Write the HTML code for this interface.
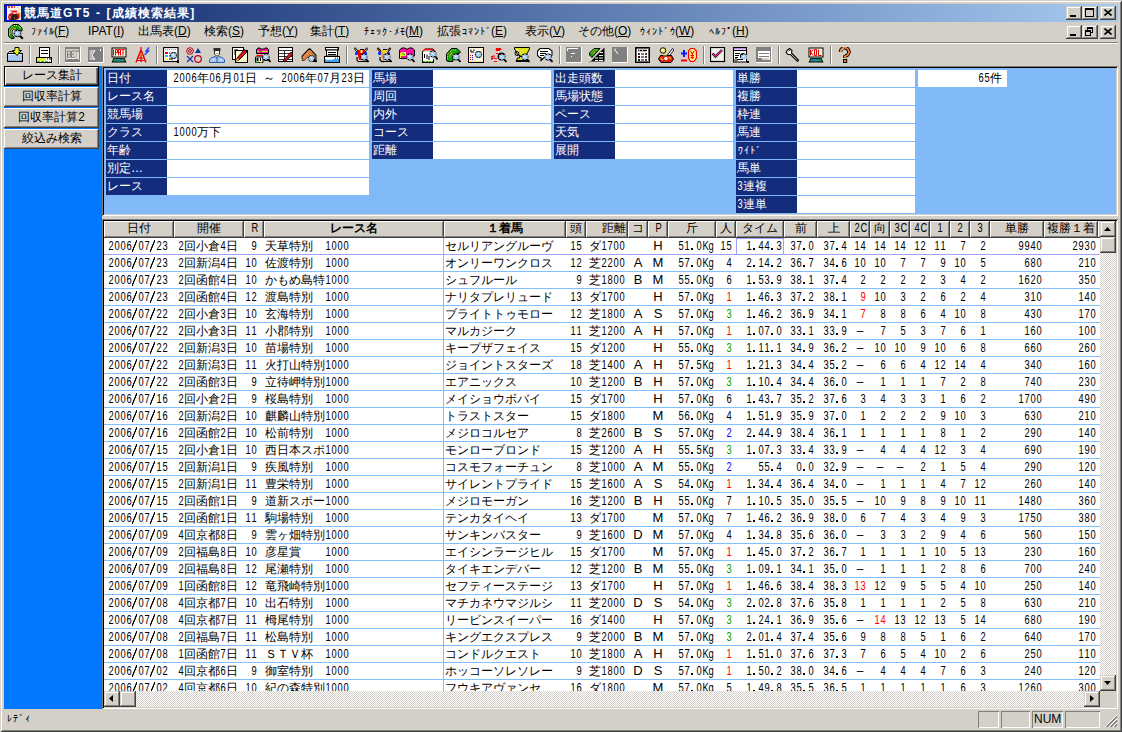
<!DOCTYPE html><html><head><meta charset="utf-8"><style>
*{box-sizing:border-box;margin:0;padding:0}
html,body{width:1122px;height:732px;overflow:hidden;background:#d4d0c8}
body{position:relative;font-family:"Liberation Sans",sans-serif;font-size:12px;color:#000}
div,span.a{position:absolute}
.h{display:inline-block;font-size:11px;position:relative;top:-1px}.h i{display:inline-block;width:6px;text-align:center;font-style:normal;transform:scale(.85,1.2)}.h i.d{transform:none;color:transparent;height:12px;vertical-align:-3px;background:linear-gradient(#000,#000) no-repeat 1px 8px/2px 2px}.h i.s{transform:none;color:transparent;height:12px;vertical-align:-3px;background:linear-gradient(to bottom right,transparent 40%,#000 46%,#000 54%,transparent 60%) no-repeat 0 0/5px 12px}
b.k,b.n{display:inline-block;width:12px;text-align:center;font-weight:inherit}b.n{width:6px;font-size:10px}.tt b.k{width:13px}
.raised{background:#d4d0c8;box-shadow:inset -1px -1px #404040,inset 1px 1px #fff,inset -2px -2px #808080}
.raised2{background:#d4d0c8;box-shadow:inset -1px -1px #404040,inset 1px 1px #d4d0c8,inset -2px -2px #808080,inset 2px 2px #fff}
.sunken{box-shadow:inset 1px 1px #808080,inset -1px -1px #fff,inset 2px 2px #000,inset -2px -2px #d4d0c8}
.dither{background-color:#fff;background-image:linear-gradient(45deg,#d4d0c8 25%,transparent 25%,transparent 75%,#d4d0c8 75%),linear-gradient(45deg,#d4d0c8 25%,transparent 25%,transparent 75%,#d4d0c8 75%);background-size:2px 2px;background-position:0 0,1px 1px}
.mi{top:21px;height:20px;line-height:20px;white-space:nowrap}
.tb{top:47px;width:16px;height:16px}
.sep{top:46px;width:2px;height:18px;border-left:1px solid #808080;border-right:1px solid #fff}
.lbl{background:#142c7c;color:#fff;height:17px;line-height:17px;padding-left:1px;white-space:nowrap}
.val{background:#fff;height:17px;line-height:17px;white-space:nowrap}
.hd{top:221px;height:17px;line-height:15px;text-align:center;white-space:nowrap;overflow:hidden}
.c{height:16px;line-height:16px;white-space:nowrap;overflow:hidden}
.rl{left:104px;width:996px;height:1px;background:#80c0ff}
.btn{left:4px;width:95px;height:20px;line-height:19px;text-align:center}
</style></head><body>
<div style="left:0;top:0;width:1122px;height:732px;box-shadow:inset 1px 1px #d4d0c8,inset -1px -1px #404040,inset 2px 2px #fff,inset -2px -2px #808080"></div><div style="left:4px;top:4px;width:1114px;height:18px;background:linear-gradient(90deg,#0a246a,#a6caf0)"></div><svg style="position:absolute;left:6px;top:5px" width="16" height="16" viewBox="0 0 16 16"><rect x="0.5" y="0.5" width="15" height="15" fill="#f8f8e0" stroke="#0010ff"/><path d="M2 2h2M5 2h2M8 2h1" stroke="#e00000" stroke-width="1.6"/><path d="M12 2v1M13.5 4v1M12 6v1M13.5 8v1M12 10v1M13.5 12v1" stroke="#90b8f0"/><path d="M5 6.5h6" stroke="#ff1010" stroke-width="2"/><rect x="4" y="5" width="2" height="2" fill="#c0a0ff"/><path d="M3 9L6 8L9 9L12 8L14 10L13 14L10 15H3L2 12Z" fill="#c01010"/><path d="M6 10L10 9L12 12L9 15H5Z" fill="#202020"/><path d="M12 8h2v4" stroke="#f0a040" stroke-width="1.2" fill="none"/><path d="M3 12h2M8 13h1" stroke="#f0a060"/></svg><div class="tt" style="left:24px;top:4px;height:18px;line-height:18px;color:#fff;font-weight:bold;font-size:12px;letter-spacing:1.6px;white-space:nowrap"><b class="k">競</b><b class="k">馬</b><b class="k">道</b>GT5 - [<b class="k">成</b><b class="k">績</b><b class="k">検</b><b class="k">索</b><b class="k">結</b><b class="k">果</b>]</div><div class="raised2" style="left:1066px;top:6px;width:16px;height:14px"><div style="left:4px;top:9px;width:6px;height:2px;background:#000"></div></div><div class="raised2" style="left:1082px;top:6px;width:16px;height:14px"><div style="left:3px;top:2px;width:9px;height:9px;border:1px solid #000;border-top-width:2px"></div></div><div class="raised2" style="left:1100px;top:6px;width:16px;height:14px"><svg style="position:absolute;left:4px;top:3px" width="8" height="7" viewBox="0 0 8 7"><path d="M0.5 0.5L7.5 6.5M7.5 0.5L0.5 6.5" stroke="#000" stroke-width="1.6"/></svg></div><div class="raised2" style="left:1066px;top:25px;width:16px;height:14px"><div style="left:4px;top:9px;width:6px;height:2px;background:#000"></div></div><div class="raised2" style="left:1082px;top:25px;width:16px;height:14px"><div style="left:5px;top:2px;width:6px;height:6px;border:1px solid #000;border-top-width:2px"></div><div style="left:3px;top:5px;width:6px;height:6px;border:1px solid #000;border-top-width:2px;background:#d4d0c8"></div></div><div class="raised2" style="left:1100px;top:25px;width:16px;height:14px"><svg style="position:absolute;left:4px;top:3px" width="8" height="7" viewBox="0 0 8 7"><path d="M0.5 0.5L7.5 6.5M7.5 0.5L0.5 6.5" stroke="#000" stroke-width="1.6"/></svg></div><svg style="position:absolute;left:7px;top:23px" width="17" height="17" viewBox="0 0 17 17"><path d="M1.5 13V6L6 1.5H11.5L15 5V8H11.5L10 6H7L5 8V12L7 14V15.5H4Z" fill="#10a010" stroke="#000"/><path d="M2.5 12.5V6.5L6.5 2.5H11" stroke="#e8f020" stroke-dasharray="1 1" fill="none"/><path d="M12 3.5L14 5.5" stroke="#e8f020"/><path d="M4.2 11.5V8L6.5 5.5H9" stroke="#e09040" stroke-width="1.1" fill="none"/><circle cx="10.5" cy="10.5" r="3.8" fill="#000"/><path d="M10.5 7.6L11.6 9L13.4 8.8L12.7 10.5L13.4 12.2L11.6 12L10.5 13.4L9.4 12L7.6 12.2L8.3 10.5L7.6 8.8L9.4 9Z" fill="#a8d0f8" stroke="#a8d0f8" stroke-width="1"/><circle cx="9.8" cy="10" r="0.8" fill="#fff"/><path d="M13 13L15.8 15.8" stroke="#000" stroke-width="2"/></svg><div class="mi" style="left:30px"><b class="n">ﾌ</b><b class="n">ｧ</b><b class="n">ｲ</b><b class="n">ﾙ</b>(<u>F</u>)</div><div class="mi" style="left:88px">IPAT(<u>I</u>)</div><div class="mi" style="left:138px"><b class="k">出</b><b class="k">馬</b><b class="k">表</b>(<u>D</u>)</div><div class="mi" style="left:204px"><b class="k">検</b><b class="k">索</b>(<u>S</u>)</div><div class="mi" style="left:258px"><b class="k">予</b><b class="k">想</b>(<u>Y</u>)</div><div class="mi" style="left:310px"><b class="k">集</b><b class="k">計</b>(<u>T</u>)</div><div class="mi" style="left:363px"><b class="n">ﾁ</b><b class="n">ｪ</b><b class="n">ｯ</b><b class="n">ｸ</b><b class="n">･</b><b class="n">ﾒ</b><b class="n">ﾓ</b>(<u>M</u>)</div><div class="mi" style="left:437px"><b class="k">拡</b><b class="k">張</b><b class="n">ｺ</b><b class="n">ﾏ</b><b class="n">ﾝ</b><b class="n">ﾄ</b><b class="n">ﾞ</b>(<u>E</u>)</div><div class="mi" style="left:525px"><b class="k">表</b><b class="k">示</b>(<u>V</u>)</div><div class="mi" style="left:578px"><b class="k">そ</b><b class="k">の</b><b class="k">他</b>(<u>O</u>)</div><div class="mi" style="left:639px"><b class="n">ｳ</b><b class="n">ｨ</b><b class="n">ﾝ</b><b class="n">ﾄ</b><b class="n">ﾞ</b><b class="n">ｳ</b>(<u>W</u>)</div><div class="mi" style="left:708px"><b class="n">ﾍ</b><b class="n">ﾙ</b><b class="n">ﾌ</b><b class="n">ﾟ</b>(<u>H</u>)</div><div style="left:4px;top:42px;width:1114px;height:1px;background:#808080"></div><div style="left:4px;top:43px;width:1114px;height:1px;background:#fff"></div><div class="sep" style="left:29px"></div><div class="sep" style="left:58px"></div><div class="sep" style="left:156px"></div><div class="sep" style="left:346px"></div><div class="sep" style="left:559px"></div><div class="sep" style="left:703px"></div><div class="sep" style="left:778px"></div><div class="sep" style="left:830px"></div><div class="tb" style="left:7px"><svg width="16" height="16" viewBox="0 0 16 16"><path d="M1.5 6.5V5.5L2.5 4.5H5.5L6.5 5.5" fill="none" stroke="#000"/><rect x="0.5" y="6.5" width="15" height="8" fill="#a8c8f0" stroke="#000"/><path d="M1 7.5h14" stroke="#e0ecff"/><path d="M2 13.5h13" stroke="#40a0ff" stroke-dasharray="1 1"/><path d="M8 0.5H12V3.5H14.5L10 8.5L5.5 3.5H8Z" fill="#f0f000" stroke="#000"/><path d="M9 1.5V5" stroke="#fff" stroke-width="0.8"/><path d="M12 4.5L11 6" stroke="#20a020"/></svg></div><div class="tb" style="left:36px"><svg width="16" height="16" viewBox="0 0 16 16"><rect x="3.5" y="0.5" width="10" height="10" fill="#fff" stroke="#000"/><path d="M5 3.5h7M5 6.5h7" stroke="#000" stroke-width="1.2"/><rect x="0.5" y="10.5" width="15" height="5" fill="#fff" stroke="#000"/><rect x="1" y="11" width="9" height="3" fill="#e8e840"/><path d="M11 12h1M13 12h2" stroke="#000"/><path d="M1 14.5h14" stroke="#e08020" stroke-dasharray="1 1"/><path d="M2 14.5h12" stroke="#20b020" stroke-dasharray="1 3"/></svg></div><div class="tb" style="left:65px"><svg width="16" height="16" viewBox="0 0 16 16"><rect x="0" y="0" width="16" height="16" fill="#fff"/><rect x="0" y="0" width="15" height="15" fill="#808080"/><rect x="1" y="2" width="13" height="11" fill="#d4d0c8"/><path d="M2.5 4V10.5H5L5.5 10V8L5 7.5H2.5M2.5 4H5L5.5 4.5V7" stroke="#808080" fill="none"/><path d="M10 4H6.5V10.5H10M6.5 7.2H9" stroke="#808080" fill="none"/><path d="M10.5 4H14M12.2 4V10.5" stroke="#808080" fill="none"/><path d="M3 11.5H6M7 11.5H10M12.8 5V11.5" stroke="#fff"/><rect x="2" y="12" width="11" height="1.2" fill="#808080"/></svg></div><div class="tb" style="left:88px"><svg width="16" height="16" viewBox="0 0 16 16"><rect x="0" y="0" width="16" height="16" fill="#fff"/><rect x="0" y="0" width="15" height="15" fill="#808080"/><rect x="2" y="2" width="11" height="11" fill="#808080"/><path d="M1.5 4h5M1.5 6h3M1.5 8h2M1.5 10h3M1.5 12h5" stroke="#fff"/><path d="M7 3L4 8L7 13" stroke="#fff" fill="none"/><rect x="12" y="2" width="1" height="2" fill="#fff"/></svg></div><div class="tb" style="left:111px"><svg width="16" height="16" viewBox="0 0 16 16"><rect x="0.5" y="0.5" width="15" height="10" fill="#000"/><rect x="1.5" y="1.5" width="13" height="8" fill="#fff8e0"/><path d="M2.5 2.5V8.5M4.5 2.5V8.5M4.5 2.5H6.5V5.5H4.5M7.5 8.5V2.5H9.5V8.5M7.5 5.5H9.5M10.5 2.5H13.5M12 2.5V8.5" stroke="#e00000" fill="none"/><path d="M0.5 15.5L2.5 11H13.5L15.5 15.5Z" fill="#000"/><path d="M1.8 14.5L3.2 11.8H12.8L14.2 14.5Z" fill="#20a040"/><path d="M4 13h3M9 12.5h3M6 14h3" stroke="#2060ff"/></svg></div><div class="tb" style="left:134px"><svg width="16" height="16" viewBox="0 0 16 16"><path d="M7 0V15" stroke="#e00000" stroke-width="1.3"/><path d="M2 15.5L6.5 4H7.5L12 15.5" stroke="#e00000" fill="none" stroke-width="1.3"/><path d="M5 8h4M4 11h6M3 13.5h8" stroke="#e00000" stroke-width="1.1"/><path d="M5.5 6L8.5 10M8.5 6L5.5 10" stroke="#f0a000" stroke-width="0.7"/><path d="M15 0.5L12 4H14.5L10.5 8" stroke="#2040ff" fill="none" stroke-width="1.3"/></svg></div><div class="tb" style="left:163px"><svg width="16" height="16" viewBox="0 0 16 16"><rect x="0.5" y="0.5" width="14.5" height="14" fill="#fff" stroke="#000" stroke-width="1.2"/><path d="M2 2.5h11" stroke="#a0a0a0" stroke-dasharray="1 1"/><rect x="2" y="5" width="3" height="2" fill="#ff0000"/><rect x="2" y="8" width="3" height="2" fill="#00c0ff"/><rect x="2" y="11" width="3" height="2" fill="#ffff00"/><path d="M6 6h1M6 9h1M6 12h4" stroke="#000"/><circle cx="10.5" cy="8.5" r="3.4" fill="#000"/><path d="M10.5 5.7l1 1.4l1.6-.2l-.6 1.6l.6 1.6l-1.6-.2l-1 1.4l-1-1.4l-1.6.2l.6-1.6l-.6-1.6l1.6.2z" fill="#b0d4f8" stroke="#b0d4f8"/><circle cx="9.9" cy="8.1" r="0.7" fill="#fff"/><rect x="14" y="13" width="2" height="3" fill="#000"/></svg></div><div class="tb" style="left:186px"><svg width="16" height="16" viewBox="0 0 16 16"><circle cx="4" cy="4" r="3.3" fill="none" stroke="#c00020"/><circle cx="4" cy="4" r="1.4" fill="none" stroke="#c00020"/><path d="M12 1L15 6H9Z" fill="#1030a0"/><path d="M1 9L7 15M7 9L1 15" stroke="#1030a0" stroke-width="1.2"/><circle cx="12" cy="12" r="3.3" fill="none" stroke="#c00020" stroke-width="1.2"/></svg></div><div class="tb" style="left:209px"><svg width="16" height="16" viewBox="0 0 16 16"><path d="M5 1.5H11V4H5Z" fill="#202020"/><rect x="4.5" y="1" width="7" height="2.5" fill="#303030"/><path d="M5.5 3.5H10.5V7L8.5 9H7.5L5.5 7Z" fill="#fff8f0" stroke="#000" stroke-width="0.8"/><rect x="7" y="6" width="2" height="1" fill="#f0a060"/><path d="M0.5 15.5V12.5L3 10.5L6 9.5L8 11L10 9.5L13 10.5L15.5 12.5V15.5Z" fill="#a8c8f0" stroke="#3060b0"/><path d="M8 11V15" stroke="#3060b0"/><path d="M3 13h2M11 13h2" stroke="#d8e8ff"/></svg></div><div class="tb" style="left:232px"><svg width="16" height="16" viewBox="0 0 16 16"><rect x="0.5" y="0.5" width="11" height="12" fill="#fff" stroke="#000"/><rect x="3.5" y="3.5" width="12" height="12" fill="#fff8d0" stroke="#000"/><path d="M2 3h4M2 5h2M2 7h2" stroke="#000"/><path d="M4 14L5 11L12.5 2.5L15 5L7 13Z" fill="#e01020" stroke="#000" stroke-width="0.9"/><path d="M4 14L5 11L7 13Z" fill="#f0e040"/></svg></div><div class="tb" style="left:255px"><svg width="16" height="16" viewBox="0 0 16 16"><path d="M1.5 6.5V2.5L3 1H5V2H10V1H12L13.5 2.5V6.5H1.5Z" fill="#ff10a0" stroke="#000"/><rect x="2" y="4" width="11" height="1" fill="#e0f020"/><rect x="4" y="4" width="3" height="1" fill="#20b020"/><path d="M1.5 8.5H8" stroke="#ff0000" stroke-width="1.3"/><path d="M0.5 15.5V10H8V15.5Z" fill="#fff" stroke="#000"/><rect x="1.5" y="11" width="2" height="3" fill="#000"/><rect x="5" y="11" width="1" height="3" fill="#000"/><path d="M1 15h3" stroke="#20b020"/><path d="M5 15h2" stroke="#f0f000"/><circle cx="11" cy="10.5" r="3.6" fill="#000"/><path d="M11 7.2L12 8.6L13.6 8.4L13 10L13.6 11.6L12 11.4L11 12.8L10 11.4L8.4 11.6L9 10L8.4 8.4L10 8.6Z" fill="#b0d4f8" stroke="#b0d4f8" stroke-width="1"/><circle cx="10.4" cy="9.6" r="0.7" fill="#fff"/><path d="M13.2 12.4L15.5 15" stroke="#000" stroke-width="1.8"/></svg></div><div class="tb" style="left:278px"><svg width="16" height="16" viewBox="0 0 16 16"><rect x="0.5" y="0.5" width="14" height="14" fill="#fff" stroke="#000"/><path d="M1 3.5h13M1 6.5h13M1 9.5h13M1 12.5h13M6.5 4v10" stroke="#000" stroke-width="0.8"/><path d="M5 14L13 5L15 7L7 15Z" fill="#e01020" stroke="#000" stroke-width="0.8"/></svg></div><div class="tb" style="left:301px"><svg width="16" height="16" viewBox="0 0 16 16"><path d="M0.5 9L7.5 1.5H9.5L15.5 8V15H12L10 11H6L3 14H1Z" fill="#000"/><path d="M1.5 9.5L7.5 3H9.5L14.5 8.5V14H12.5L10.5 10.5H6L3 13.5H1.5Z" fill="#e08040"/><path d="M9 3.5L14 9" stroke="#20b020" stroke-dasharray="1 2"/><path d="M2.5 10L7 5.5" stroke="#f0c080" stroke-dasharray="1 1"/><circle cx="10.5" cy="11.5" r="3.2" fill="#000"/><path d="M10.5 9.2L12.5 10L13 11.5L12.5 13L10.5 14L8.5 13L8 11.5L8.5 10Z" fill="#b0d4f8" stroke="#b0d4f8" stroke-width="1"/><circle cx="10.4" cy="11" r="0.7" fill="#fff"/><path d="M13.2 12.4L15.5 15" stroke="#000" stroke-width="1.8"/></svg></div><div class="tb" style="left:324px"><svg width="16" height="16" viewBox="0 0 16 16"><rect x="1.5" y="0.5" width="13" height="2.5" fill="#fff" stroke="#000"/><rect x="13" y="1" width="1" height="2" fill="#808080"/><rect x="2.5" y="3" width="11" height="6" fill="#fff" stroke="#000"/><path d="M4 5.5h8M4 7.5h8" stroke="#000"/><rect x="0.5" y="9.5" width="15" height="6" fill="#fff" stroke="#000"/><rect x="1" y="12" width="14" height="3" fill="#40a0f0"/><path d="M2 12.5h7" stroke="#d0e8ff"/><rect x="11" y="10.5" width="1" height="1" fill="#000"/><rect x="13" y="10.5" width="1" height="1" fill="#000"/></svg></div><div class="tb" style="left:353px"><svg width="16" height="16" viewBox="0 0 16 16"><path d="M1.5 1L5 5M14.5 1L11 5" stroke="#000" stroke-width="2.2"/><path d="M1.8 1.4L4.6 4.4M14.2 1.4L11.4 4.4" stroke="#fff" stroke-width="0.8"/><rect x="7" y="2" width="4" height="1" fill="#000"/><path d="M5 3H12V9L9 13H6L5 9Z" fill="#e80000"/><rect x="7.5" y="3" width="2" height="3" fill="#f0f040"/><rect x="8" y="3.5" width="1" height="1.5" fill="#fff"/><rect x="2" y="5" width="3" height="3" rx="1" fill="#0030ff"/><rect x="11" y="5" width="3" height="3" rx="1" fill="#0030ff"/><path d="M4 10L4 13L6 15M5 14.5H16" stroke="#000" stroke-width="1.2" fill="none"/><path d="M5 12.5L7 14" stroke="#fff"/><circle cx="11" cy="10" r="3.4" fill="#000"/><path d="M11 7.2L12 8.6L13.6 8.4L13 10L13.6 11.6L12 11.4L11 12.8L10 11.4L8.4 11.6L9 10L8.4 8.4L10 8.6Z" fill="#b0d4f8" stroke="#b0d4f8" stroke-width="1"/><circle cx="10.4" cy="9.6" r="0.7" fill="#fff"/><path d="M13.2 12.4L15.5 15" stroke="#000" stroke-width="1.8"/></svg></div><div class="tb" style="left:376px"><svg width="16" height="16" viewBox="0 0 16 16"><path d="M1.5 1L5 5M14.5 1L11 5" stroke="#000" stroke-width="2.2"/><path d="M1.8 1.4L4.6 4.4M14.2 1.4L11.4 4.4" stroke="#e08030" stroke-width="0.9"/><rect x="7" y="2" width="4" height="1" fill="#000"/><path d="M5 3H12V9L9 13H6L5 9Z" fill="#e8a060"/><rect x="6.5" y="3" width="4" height="3" fill="#e0e020"/><rect x="2" y="5" width="3" height="3" rx="1" fill="#0030ff"/><rect x="11" y="5" width="3" height="3" rx="1" fill="#0030ff"/><path d="M7.5 7V16" stroke="#e08030"/><path d="M4 10L4 13L6 15M5 14.5H16" stroke="#000" stroke-width="1.2" fill="none"/><circle cx="11" cy="10" r="3.4" fill="#000"/><path d="M11 7.2L12 8.6L13.6 8.4L13 10L13.6 11.6L12 11.4L11 12.8L10 11.4L8.4 11.6L9 10L8.4 8.4L10 8.6Z" fill="#b0d4f8" stroke="#b0d4f8" stroke-width="1"/><circle cx="10.4" cy="9.6" r="0.7" fill="#fff"/><path d="M13.2 12.4L15.5 15" stroke="#000" stroke-width="1.8"/></svg></div><div class="tb" style="left:399px"><svg width="16" height="16" viewBox="0 0 16 16"><path d="M0.5 11.5V3L3 1H6L7 2H9L10 1H13L15.5 3V9H10V11.5Z" fill="#ff10a0" stroke="#000"/><rect x="2" y="5" width="5" height="4" fill="#e0f020"/><path d="M3 6L6 8" stroke="#20a020"/><rect x="1" y="6" width="1" height="5" fill="#e0f020"/><circle cx="11" cy="10" r="3.4" fill="#000"/><path d="M11 7.2L12 8.6L13.6 8.4L13 10L13.6 11.6L12 11.4L11 12.8L10 11.4L8.4 11.6L9 10L8.4 8.4L10 8.6Z" fill="#b0d4f8" stroke="#b0d4f8" stroke-width="1"/><circle cx="10.4" cy="9.6" r="0.7" fill="#fff"/><path d="M13.2 12.4L15.5 15" stroke="#000" stroke-width="1.8"/></svg></div><div class="tb" style="left:422px"><svg width="16" height="16" viewBox="0 0 16 16"><path d="M0.5 4.5L3 2H11L12.5 4" stroke="#000" fill="none"/><path d="M1 4L3 2.5H10L12 4" stroke="#ff0000" stroke-width="1.4" fill="none"/><path d="M0.5 4.5V15.5H11.5V12" stroke="#000" fill="#fff"/><rect x="1" y="5" width="10" height="10" fill="#fff"/><path d="M2.5 7V11M5 7.5V12M7 9V13" stroke="#000"/><path d="M1 14.5h10" stroke="#20b020"/><path d="M3 14.5h1M6 14.5h1M9 14.5h1" stroke="#f0f000"/><path d="M0.5 4.5V15.5H11.5" stroke="#000" fill="none"/><circle cx="11" cy="7" r="3.4" fill="#000"/><path d="M11 4.2L12 5.6L13.6 5.4L13 7L13.6 8.6L12 8.4L11 9.8L10 8.4L8.4 8.6L9 7L8.4 5.4L10 5.6Z" fill="#b0d4f8" stroke="#b0d4f8" stroke-width="1"/><circle cx="10.4" cy="6.6" r="0.7" fill="#fff"/><path d="M13.5 9.5L15.5 12.5" stroke="#000" stroke-width="1.8"/></svg></div><div class="tb" style="left:445px"><svg width="16" height="16" viewBox="0 0 16 16"><path d="M1.5 13.5V7L6.5 1.5H12L15 4.5V6L11 7L8 9V14.5H3Z" fill="#10a010" stroke="#000"/><path d="M2.5 12V7.5L7 3H11.5" stroke="#e8f020" stroke-dasharray="1 1" fill="none"/><path d="M5 10V8L7.5 5.5" stroke="#e09040" stroke-width="1.2" fill="none"/><circle cx="11" cy="10" r="3.4" fill="#000"/><path d="M11 7.2L12 8.6L13.6 8.4L13 10L13.6 11.6L12 11.4L11 12.8L10 11.4L8.4 11.6L9 10L8.4 8.4L10 8.6Z" fill="#b0d4f8" stroke="#b0d4f8" stroke-width="1"/><circle cx="10.4" cy="9.6" r="0.7" fill="#fff"/><path d="M13.2 12.4L15.5 15" stroke="#000" stroke-width="1.8"/></svg></div><div class="tb" style="left:468px"><svg width="16" height="16" viewBox="0 0 16 16"><rect x="0.5" y="0.5" width="15" height="15" fill="#f8f4e0" stroke="#000"/><path d="M3 2.5V5H6M6 2.5V4" stroke="#000" fill="none"/><path d="M2 14.5H14" stroke="#f0d890"/><rect x="2" y="8" width="1" height="1" fill="#f00"/><rect x="2" y="10" width="1" height="1" fill="#f00"/><rect x="2" y="12" width="1" height="1" fill="#f00"/><rect x="4" y="8" width="1" height="1" fill="#00f"/><rect x="4" y="10" width="1" height="1" fill="#00f"/><rect x="4" y="12" width="1" height="1" fill="#00f"/><circle cx="10.5" cy="7.5" r="3.4" fill="#000"/><path d="M10.5 4.7l1 1.4l1.6-.2l-.6 1.6l.6 1.6l-1.6-.2l-1 1.4l-1-1.4l-1.6.2l.6-1.6l-.6-1.6l1.6.2z" fill="#b0d4f8" stroke="#b0d4f8"/><circle cx="9.9" cy="7.1" r="0.7" fill="#fff"/><rect x="14" y="2" width="1" height="2" fill="#f0d890"/></svg></div><div class="tb" style="left:491px"><svg width="16" height="16" viewBox="0 0 16 16"><path d="M5 1.5h5M4.5 2.5h6M5 3.5h4" stroke="#ff0000"/><path d="M0 9.5h2M0 11.5h2M1 10v3M3 8v4M3 14.5h3M4 11.5h2M5 6.5h2" stroke="#ff0000" stroke-width="1.1"/><circle cx="10.5" cy="9.5" r="3.9" fill="#000"/><path d="M11 7.2L12 8.6L13.6 8.4L13 10L13.6 11.6L12 11.4L11 12.8L10 11.4L8.4 11.6L9 10L8.4 8.4L10 8.6Z" fill="#b0d4f8" stroke="#b0d4f8" stroke-width="1"/><circle cx="10.4" cy="9.6" r="0.7" fill="#fff"/><path d="M13.2 12.4L15.5 15" stroke="#000" stroke-width="1.8"/></svg></div><div class="tb" style="left:514px"><svg width="16" height="16" viewBox="0 0 16 16"><path d="M0.5 0.5H15.5V2L12.5 7.5L9.5 9H6.5L3.5 7.5L0.5 2Z" fill="#e0e020" stroke="#000"/><path d="M3 2L6 7" stroke="#fff"/><circle cx="3" cy="6.5" r="2" fill="none" stroke="#000"/><path d="M5.5 9.5H10.5V11H12.5L14 14.5H2L3.5 11H5.5Z" fill="#e0e020" stroke="#000"/><path d="M3 13.5H13" stroke="#000"/><circle cx="11" cy="10" r="3.4" fill="#000"/><path d="M11 7.2L12 8.6L13.6 8.4L13 10L13.6 11.6L12 11.4L11 12.8L10 11.4L8.4 11.6L9 10L8.4 8.4L10 8.6Z" fill="#b0d4f8" stroke="#b0d4f8" stroke-width="1"/><circle cx="10.4" cy="9.6" r="0.7" fill="#fff"/><path d="M13.2 12.4L15.5 15" stroke="#000" stroke-width="1.8"/></svg></div><div class="tb" style="left:537px"><svg width="16" height="16" viewBox="0 0 16 16"><path d="M3 1.5H12L15 4V8L13 10.5H7L4 13.5V10.5H2.5L0.5 8.5V4Z" fill="#fff" stroke="#000" stroke-width="1.1"/><path d="M3 4.5h8M3 6.5h6M3 8.5h4" stroke="#000"/><path d="M4.5 13.5L6 12" stroke="#000"/><circle cx="11" cy="10" r="3.4" fill="#000"/><path d="M11 7.2L12 8.6L13.6 8.4L13 10L13.6 11.6L12 11.4L11 12.8L10 11.4L8.4 11.6L9 10L8.4 8.4L10 8.6Z" fill="#b0d4f8" stroke="#b0d4f8" stroke-width="1"/><circle cx="10.4" cy="9.6" r="0.7" fill="#fff"/><path d="M13.2 12.4L15.5 15" stroke="#000" stroke-width="1.8"/></svg></div><div class="tb" style="left:566px"><svg width="16" height="16" viewBox="0 0 16 16"><rect x="0" y="0" width="16" height="16" fill="#fff"/><rect x="0" y="0" width="15" height="15" fill="#808080"/><path d="M1.5 4V1.5H12" stroke="#fff" fill="none"/><path d="M5 6.5h4" stroke="#fff"/><rect x="5" y="9" width="1" height="1" fill="#fff"/></svg></div><div class="tb" style="left:589px"><svg width="16" height="16" viewBox="0 0 16 16"><path d="M0.5 15.5L15.5 0.5V14.5H0.5Z" fill="#000"/><path d="M6 11h3M10 11h4M6 13.5h3M10 13.5h4M10 8.5h4M11 5.5h3" stroke="#fff"/><path d="M0.5 6L5 1.5H11L3 10.5L0.5 8Z" fill="#10a010" stroke="#000"/><path d="M2 6L5 3H9" stroke="#e8f020" stroke-dasharray="1 1" fill="none"/><path d="M4 7L6 5" stroke="#e09040" stroke-width="1.2"/><path d="M0 10L2 13" stroke="#fff" stroke-width="0.6"/></svg></div><div class="tb" style="left:612px"><svg width="16" height="16" viewBox="0 0 16 16"><rect x="0" y="0" width="16" height="16" fill="#fff"/><rect x="0" y="0" width="15" height="15" fill="#808080"/><path d="M3 1.5V3L6 7" stroke="#fff" fill="none"/></svg></div><div class="tb" style="left:635px"><svg width="16" height="16" viewBox="0 0 16 16"><rect x="0.5" y="0.5" width="14" height="15" fill="#fff" stroke="#000"/><rect x="1.5" y="1.5" width="12" height="13" fill="none" stroke="#000" stroke-width="0.6"/><path d="M3 3.5h9" stroke="#000" stroke-width="1.5"/><path d="M4 3.5h1M7 3.5h1" stroke="#f0d060"/><path d="M3 7h2M6.5 7h2M10 7h2M3 10h2M6.5 10h2M10 10h2M3 13h2M6.5 13h2M10 13h2" stroke="#000" stroke-width="2"/><path d="M3.5 7h1M7 7h1M10.5 7h1M7 10h1M10.5 10h1M7 13h1M10.5 13h1" stroke="#fff"/><path d="M3.5 10h1" stroke="#f00000"/><path d="M3.5 13h1" stroke="#40c020"/></svg></div><div class="tb" style="left:658px"><svg width="16" height="16" viewBox="0 0 16 16"><circle cx="5" cy="3.5" r="2.8" fill="#f0e040" stroke="#000" stroke-width="0.9"/><circle cx="4.5" cy="3" r="1" fill="#fff"/><path d="M8 10L14.5 1.5L16 3L10 10.5Z" fill="#fff" stroke="#000" stroke-width="0.9"/><path d="M0.5 12L2.5 8.5H13.5L15.5 12L13 15.5H3Z" fill="#e02010" stroke="#000"/><circle cx="8" cy="11.5" r="1.8" fill="#fff"/><path d="M2.5 11L5 13M11 10L13 12" stroke="#f0c030" stroke-width="1.1"/><path d="M5 8h4" stroke="#f0e040"/></svg></div><div class="tb" style="left:681px"><svg width="16" height="16" viewBox="0 0 16 16"><path d="M3 3V10M0 6.5H6" stroke="#0020ff" stroke-width="2"/><path d="M0 13.5H6" stroke="#ff0000" stroke-width="2"/><path d="M9.5 1.5H13L15.5 4V11L13 14.5H9.5L7.5 11V4Z" fill="#f8f080" stroke="#ff0000" stroke-width="1.2"/><path d="M9.5 4L11.3 7L13 4M11.3 7V12M9.5 8.5H13M9.5 10.5H13" stroke="#ff0000" fill="none" stroke-width="1"/></svg></div><div class="tb" style="left:710px"><svg width="16" height="16" viewBox="0 0 16 16"><rect x="0.5" y="0.5" width="14" height="14" fill="#f0f0e8" stroke="#000" stroke-width="1.2"/><path d="M2.5 6.5L5.5 9.5L12 3" stroke="#000" stroke-width="2.4" fill="none"/><path d="M2.5 6.5L5.5 9.5L12 3" stroke="#ff20a0" stroke-width="1.1" fill="none"/></svg></div><div class="tb" style="left:733px"><svg width="16" height="16" viewBox="0 0 16 16"><rect x="0.5" y="0.5" width="13" height="14.5" fill="#fff" stroke="#000"/><rect x="1" y="1" width="12" height="1.5" fill="#c090f0"/><path d="M1 3.5H13" stroke="#000"/><path d="M2 6.5h5M2 8.5h4M4 12.5h6M2 10.5H5" stroke="#000"/><circle cx="3" cy="13" r="1.3" fill="#fff" stroke="#000" stroke-width="0.8"/><rect x="14" y="14" width="2" height="2" fill="#000"/><circle cx="10" cy="9" r="3" fill="#000"/><path d="M11 7.2L12 8.6L13.6 8.4L13 10L13.6 11.6L12 11.4L11 12.8L10 11.4L8.4 11.6L9 10L8.4 8.4L10 8.6Z" fill="#b0d4f8" stroke="#b0d4f8" stroke-width="1"/><circle cx="10.4" cy="9.6" r="0.7" fill="#fff"/></svg></div><div class="tb" style="left:756px"><svg width="16" height="16" viewBox="0 0 16 16"><rect x="0" y="0" width="16" height="16" fill="#fff"/><rect x="0" y="0" width="15" height="15" fill="#808080"/><rect x="2" y="4" width="12" height="9" fill="#fff"/><path d="M3 6.5h10M3 9.5h10" stroke="#808080"/><rect x="2" y="11" width="4" height="2" fill="#808080"/><rect x="6" y="11" width="7" height="2" fill="#d4d0c8"/></svg></div><div class="tb" style="left:785px"><svg width="16" height="16" viewBox="0 0 16 16"><path d="M2 3.5L4.5 1.5L7 3.5L6.5 6L13.5 13L12.5 14.5L5.5 7.5L3 7.5L1 5.5Z" fill="#fff" stroke="#000" stroke-width="1.1"/><path d="M3.5 4.5L5 3" stroke="#000" stroke-width="0.8"/></svg></div><div class="tb" style="left:808px"><svg width="16" height="16" viewBox="0 0 16 16"><rect x="0.5" y="0.5" width="15" height="10" fill="#000"/><rect x="1.5" y="1.5" width="13" height="8" fill="#fff8e0"/><path d="M2.5 2.5V8.5M5 2.5L3 5.5L5 8.5M6.5 2.5H8.5V8.5H6.5Z M10.5 2.5V8.5H13.5" stroke="#e00000" fill="none"/><path d="M0.5 15.5L2.5 11H13.5L15.5 15.5Z" fill="#000"/><path d="M1.8 14.5L3.2 11.8H12.8L14.2 14.5Z" fill="#20a040"/><path d="M4 13h3M9 12.5h3M6 14h3" stroke="#2060ff"/></svg></div><div class="tb" style="left:837px"><svg width="16" height="16" viewBox="0 0 16 16"><path d="M3.5 5A4.2 4.2 0 1 1 10.5 8L8 9.5V11" stroke="#000" stroke-width="3.6" fill="none"/><path d="M3.5 5A4.2 4.2 0 1 1 10.5 8L8 9.5V11" stroke="#f08040" stroke-width="1.8" fill="none"/><path d="M4 4.5A3.8 3.8 0 0 1 7 2" stroke="#fff" stroke-width="0.7" fill="none"/><rect x="6.5" y="12.5" width="3.2" height="3" fill="#f08040" stroke="#000"/></svg></div><div style="left:4px;top:66px;width:98px;height:643px;background:#0078ff"></div><div class="btn" style="top:66px;background:#d4d0c8;box-shadow:inset 1px 1px #000,inset -1px -1px #000,inset 2px 2px #fff,inset -2px -2px #404040,inset -3px -3px #808080"><b class="k">レ</b><b class="k">ー</b><b class="k">ス</b><b class="k">集</b><b class="k">計</b></div><div class="btn raised" style="top:87px"><b class="k">回</b><b class="k">収</b><b class="k">率</b><b class="k">計</b><b class="k">算</b></div><div class="btn raised" style="top:108px"><b class="k">回</b><b class="k">収</b><b class="k">率</b><b class="k">計</b><b class="k">算</b>2</div><div class="btn raised" style="top:129px"><b class="k">絞</b><b class="k">込</b><b class="k">み</b><b class="k">検</b><b class="k">索</b></div><div class="sunken" style="left:102px;top:66px;width:1016px;height:150px;background:#80b8f8"></div><div class="lbl" style="left:106px;top:70px;width:61px"><b class="k">日</b><b class="k">付</b></div><div class="val" style="left:167px;top:70px;width:202px;padding-left:6px"><span class="h"><i>2</i><i>0</i><i>0</i><i>6</i></span><b class="k">年</b><span class="h"><i>0</i><i>6</i></span><b class="k">月</b><span class="h"><i>0</i><i>1</i></span><b class="k">日</b><span class="h"><i> </i></span><b class="k">～</b><span class="h"><i> </i><i>2</i><i>0</i><i>0</i><i>6</i></span><b class="k">年</b><span class="h"><i>0</i><i>7</i></span><b class="k">月</b><span class="h"><i>2</i><i>3</i></span><b class="k">日</b></div><div class="lbl" style="left:106px;top:88px;width:61px"><b class="k">レ</b><b class="k">ー</b><b class="k">ス</b><b class="k">名</b></div><div class="val" style="left:167px;top:88px;width:202px;padding-left:6px"></div><div class="lbl" style="left:106px;top:106px;width:61px"><b class="k">競</b><b class="k">馬</b><b class="k">場</b></div><div class="val" style="left:167px;top:106px;width:202px;padding-left:6px"></div><div class="lbl" style="left:106px;top:124px;width:61px"><b class="k">ク</b><b class="k">ラ</b><b class="k">ス</b></div><div class="val" style="left:167px;top:124px;width:202px;padding-left:6px"><span class="h"><i>1</i><i>0</i><i>0</i><i>0</i></span><b class="k">万</b><b class="k">下</b></div><div class="lbl" style="left:106px;top:142px;width:61px"><b class="k">年</b><b class="k">齢</b></div><div class="val" style="left:167px;top:142px;width:202px;padding-left:6px"></div><div class="lbl" style="left:106px;top:160px;width:61px"><b class="k">別</b><b class="k">定</b><b class="k">…</b></div><div class="val" style="left:167px;top:160px;width:202px;padding-left:6px"></div><div class="lbl" style="left:106px;top:178px;width:61px"><b class="k">レ</b><b class="k">ー</b><b class="k">ス</b></div><div class="val" style="left:167px;top:178px;width:202px;padding-left:6px"></div><div class="lbl" style="left:372px;top:70px;width:61px"><b class="k">馬</b><b class="k">場</b></div><div class="val" style="left:433px;top:70px;width:118px;padding-left:6px"></div><div class="lbl" style="left:372px;top:88px;width:61px"><b class="k">周</b><b class="k">回</b></div><div class="val" style="left:433px;top:88px;width:118px;padding-left:6px"></div><div class="lbl" style="left:372px;top:106px;width:61px"><b class="k">内</b><b class="k">外</b></div><div class="val" style="left:433px;top:106px;width:118px;padding-left:6px"></div><div class="lbl" style="left:372px;top:124px;width:61px"><b class="k">コ</b><b class="k">ー</b><b class="k">ス</b></div><div class="val" style="left:433px;top:124px;width:118px;padding-left:6px"></div><div class="lbl" style="left:372px;top:142px;width:61px"><b class="k">距</b><b class="k">離</b></div><div class="val" style="left:433px;top:142px;width:118px;padding-left:6px"></div><div class="lbl" style="left:554px;top:70px;width:61px"><b class="k">出</b><b class="k">走</b><b class="k">頭</b><b class="k">数</b></div><div class="val" style="left:615px;top:70px;width:118px;padding-left:6px"></div><div class="lbl" style="left:554px;top:88px;width:61px"><b class="k">馬</b><b class="k">場</b><b class="k">状</b><b class="k">態</b></div><div class="val" style="left:615px;top:88px;width:118px;padding-left:6px"></div><div class="lbl" style="left:554px;top:106px;width:61px"><b class="k">ペ</b><b class="k">ー</b><b class="k">ス</b></div><div class="val" style="left:615px;top:106px;width:118px;padding-left:6px"></div><div class="lbl" style="left:554px;top:124px;width:61px"><b class="k">天</b><b class="k">気</b></div><div class="val" style="left:615px;top:124px;width:118px;padding-left:6px"></div><div class="lbl" style="left:554px;top:142px;width:61px"><b class="k">展</b><b class="k">開</b></div><div class="val" style="left:615px;top:142px;width:118px;padding-left:6px"></div><div class="lbl" style="left:736px;top:70px;width:61px"><b class="k">単</b><b class="k">勝</b></div><div class="val" style="left:797px;top:70px;width:118px;padding-left:6px"></div><div class="lbl" style="left:736px;top:88px;width:61px"><b class="k">複</b><b class="k">勝</b></div><div class="val" style="left:797px;top:88px;width:118px;padding-left:6px"></div><div class="lbl" style="left:736px;top:106px;width:61px"><b class="k">枠</b><b class="k">連</b></div><div class="val" style="left:797px;top:106px;width:118px;padding-left:6px"></div><div class="lbl" style="left:736px;top:124px;width:61px"><b class="k">馬</b><b class="k">連</b></div><div class="val" style="left:797px;top:124px;width:118px;padding-left:6px"></div><div class="lbl" style="left:736px;top:142px;width:61px"><b class="n">ﾜ</b><b class="n">ｲ</b><b class="n">ﾄ</b><b class="n">ﾞ</b></div><div class="val" style="left:797px;top:142px;width:118px;padding-left:6px"></div><div class="lbl" style="left:736px;top:160px;width:61px"><b class="k">馬</b><b class="k">単</b></div><div class="val" style="left:797px;top:160px;width:118px;padding-left:6px"></div><div class="lbl" style="left:736px;top:178px;width:61px"><span class="h"><i>3</i></span><b class="k">連</b><b class="k">複</b></div><div class="val" style="left:797px;top:178px;width:118px;padding-left:6px"></div><div class="lbl" style="left:736px;top:196px;width:61px"><span class="h"><i>3</i></span><b class="k">連</b><b class="k">単</b></div><div class="val" style="left:797px;top:196px;width:118px;padding-left:6px"></div><div class="val" style="left:918px;top:70px;width:89px;text-align:right;padding-right:5px"><span class="h"><i>6</i><i>5</i></span><b class="k">件</b></div><div class="sunken" style="left:102px;top:219px;width:1016px;height:490px;background:#fff"></div><div class="hd raised" style="left:104px;width:70px;"><b class="k">日</b><b class="k">付</b></div><div class="hd raised" style="left:174px;width:70px;"><b class="k">開</b><b class="k">催</b></div><div class="hd raised" style="left:244px;width:20px;"><span class="h"><i>R</i></span></div><div class="hd raised" style="left:264px;width:180px;font-weight:bold;"><b class="k">レ</b><b class="k">ー</b><b class="k">ス</b><b class="k">名</b></div><div class="hd raised" style="left:444px;width:122px;font-weight:bold;"><b class="k">１</b><b class="k">着</b><b class="k">馬</b></div><div class="hd raised" style="left:566px;width:20px;"><b class="k">頭</b></div><div class="hd raised" style="left:586px;width:42px;text-align:right;padding-right:2px;"><b class="k">距</b><b class="k">離</b></div><div class="hd raised" style="left:628px;width:20px;"><b class="k">コ</b></div><div class="hd raised" style="left:648px;width:20px;"><span class="h"><i>P</i></span></div><div class="hd raised" style="left:668px;width:48px;"><b class="k">斤</b></div><div class="hd raised" style="left:716px;width:20px;"><b class="k">人</b></div><div class="hd raised" style="left:736px;width:48px;"><b class="k">タ</b><b class="k">イ</b><b class="k">ム</b></div><div class="hd raised" style="left:784px;width:33px;"><b class="k">前</b></div><div class="hd raised" style="left:817px;width:33px;"><b class="k">上</b></div><div class="hd raised" style="left:850px;width:20px;"><span class="h"><i>2</i><i>C</i></span></div><div class="hd raised" style="left:870px;width:20px;"><b class="k">向</b></div><div class="hd raised" style="left:890px;width:20px;"><span class="h"><i>3</i><i>C</i></span></div><div class="hd raised" style="left:910px;width:20px;"><span class="h"><i>4</i><i>C</i></span></div><div class="hd raised" style="left:930px;width:20px;"><span class="h"><i>1</i></span></div><div class="hd raised" style="left:950px;width:20px;"><span class="h"><i>2</i></span></div><div class="hd raised" style="left:970px;width:20px;"><span class="h"><i>3</i></span></div><div class="hd raised" style="left:990px;width:54px;"><b class="k">単</b><b class="k">勝</b></div><div class="hd raised" style="left:1044px;width:54px;"><b class="k">複</b><b class="k">勝</b><b class="k">１</b><b class="k">着</b></div><div class="hd raised" style="left:1098px;width:10px"></div><div class="c" style="left:104px;top:238px;width:70px;text-align:left;padding-left:4px;"><span class="h"><i>2</i><i>0</i><i>0</i><i>6</i><i class="s">/</i><i>0</i><i>7</i><i class="s">/</i><i>2</i><i>3</i></span></div><div class="c" style="left:174px;top:238px;width:70px;text-align:left;padding-left:4px;"><span class="h"><i>2</i></span><b class="k">回</b><b class="k">小</b><b class="k">倉</b><span class="h"><i>4</i></span><b class="k">日</b></div><div class="c" style="left:244px;top:238px;width:20px;text-align:right;padding-right:7px;"><span class="h"><i>9</i></span></div><div class="c" style="left:264px;top:238px;width:180px;text-align:left;padding-left:1px;"><b class="k">天</b><b class="k">草</b><b class="k">特</b><b class="k">別</b><b class="k">　</b><span class="h"><i>1</i><i>0</i><i>0</i><i>0</i></span></div><div class="c" style="left:444px;top:238px;width:122px;text-align:left;padding-left:1px;"><b class="k">セ</b><b class="k">ル</b><b class="k">リ</b><b class="k">ア</b><b class="k">ン</b><b class="k">グ</b><b class="k">ル</b><b class="k">ー</b><b class="k">ヴ</b></div><div class="c" style="left:566px;top:238px;width:20px;text-align:right;padding-right:4px;"><span class="h"><i>1</i><i>5</i></span></div><div class="c" style="left:586px;top:238px;width:42px;text-align:left;padding-left:3px;"><b class="k">ダ</b><span class="h"><i>1</i><i>7</i><i>0</i><i>0</i></span></div><div class="c" style="left:648px;top:238px;width:20px;text-align:center;font-size:13px;">H</div><div class="c" style="left:668px;top:238px;width:48px;text-align:right;padding-right:2px;"><span class="h"><i>5</i><i>1</i><i class="d">.</i><i>0</i><i>K</i><i>g</i></span></div><div class="c" style="left:716px;top:238px;width:20px;text-align:right;padding-right:4px;"><span class="h"><i>1</i><i>5</i></span></div><div class="c" style="left:736px;top:238px;width:48px;text-align:right;padding-right:2px;"><span class="h"><i>1</i><i class="d">.</i><i>4</i><i>4</i><i class="d">.</i><i>3</i></span></div><div class="c" style="left:784px;top:238px;width:33px;text-align:right;padding-right:3px;"><span class="h"><i>3</i><i>7</i><i class="d">.</i><i>0</i></span></div><div class="c" style="left:817px;top:238px;width:33px;text-align:right;padding-right:3px;"><span class="h"><i>3</i><i>7</i><i class="d">.</i><i>4</i></span></div><div class="c" style="left:850px;top:238px;width:20px;text-align:right;padding-right:4px;"><span class="h"><i>1</i><i>4</i></span></div><div class="c" style="left:870px;top:238px;width:20px;text-align:right;padding-right:4px;"><span class="h"><i>1</i><i>4</i></span></div><div class="c" style="left:890px;top:238px;width:20px;text-align:right;padding-right:4px;"><span class="h"><i>1</i><i>4</i></span></div><div class="c" style="left:910px;top:238px;width:20px;text-align:right;padding-right:4px;"><span class="h"><i>1</i><i>2</i></span></div><div class="c" style="left:930px;top:238px;width:20px;text-align:right;padding-right:4px;"><span class="h"><i>1</i><i>1</i></span></div><div class="c" style="left:950px;top:238px;width:20px;text-align:right;padding-right:4px;"><span class="h"><i>7</i></span></div><div class="c" style="left:970px;top:238px;width:20px;text-align:right;padding-right:4px;"><span class="h"><i>2</i></span></div><div class="c" style="left:990px;top:238px;width:54px;text-align:right;padding-right:2px;"><span class="h"><i>9</i><i>9</i><i>4</i><i>0</i></span></div><div class="c" style="left:1044px;top:238px;width:54px;text-align:right;padding-right:2px;"><span class="h"><i>2</i><i>9</i><i>3</i><i>0</i></span></div><div class="rl" style="top:254px;background:#a0a0ff"></div><div class="c" style="left:104px;top:255px;width:70px;text-align:left;padding-left:4px;"><span class="h"><i>2</i><i>0</i><i>0</i><i>6</i><i class="s">/</i><i>0</i><i>7</i><i class="s">/</i><i>2</i><i>3</i></span></div><div class="c" style="left:174px;top:255px;width:70px;text-align:left;padding-left:4px;"><span class="h"><i>2</i></span><b class="k">回</b><b class="k">新</b><b class="k">潟</b><span class="h"><i>4</i></span><b class="k">日</b></div><div class="c" style="left:244px;top:255px;width:20px;text-align:right;padding-right:7px;"><span class="h"><i>1</i><i>0</i></span></div><div class="c" style="left:264px;top:255px;width:180px;text-align:left;padding-left:1px;"><b class="k">佐</b><b class="k">渡</b><b class="k">特</b><b class="k">別</b><b class="k">　</b><span class="h"><i>1</i><i>0</i><i>0</i><i>0</i></span></div><div class="c" style="left:444px;top:255px;width:122px;text-align:left;padding-left:1px;"><b class="k">オ</b><b class="k">ン</b><b class="k">リ</b><b class="k">ー</b><b class="k">ワ</b><b class="k">ン</b><b class="k">ク</b><b class="k">ロ</b><b class="k">ス</b></div><div class="c" style="left:566px;top:255px;width:20px;text-align:right;padding-right:4px;"><span class="h"><i>1</i><i>2</i></span></div><div class="c" style="left:586px;top:255px;width:42px;text-align:left;padding-left:3px;"><b class="k">芝</b><span class="h"><i>2</i><i>2</i><i>0</i><i>0</i></span></div><div class="c" style="left:628px;top:255px;width:20px;text-align:center;font-size:13px;">A</div><div class="c" style="left:648px;top:255px;width:20px;text-align:center;font-size:13px;">M</div><div class="c" style="left:668px;top:255px;width:48px;text-align:right;padding-right:2px;"><span class="h"><i>5</i><i>7</i><i class="d">.</i><i>0</i><i>K</i><i>g</i></span></div><div class="c" style="left:716px;top:255px;width:20px;text-align:right;padding-right:4px;"><span class="h"><i>4</i></span></div><div class="c" style="left:736px;top:255px;width:48px;text-align:right;padding-right:2px;"><span class="h"><i>2</i><i class="d">.</i><i>1</i><i>4</i><i class="d">.</i><i>2</i></span></div><div class="c" style="left:784px;top:255px;width:33px;text-align:right;padding-right:3px;"><span class="h"><i>3</i><i>6</i><i class="d">.</i><i>7</i></span></div><div class="c" style="left:817px;top:255px;width:33px;text-align:right;padding-right:3px;"><span class="h"><i>3</i><i>4</i><i class="d">.</i><i>6</i></span></div><div class="c" style="left:850px;top:255px;width:20px;text-align:right;padding-right:4px;"><span class="h"><i>1</i><i>0</i></span></div><div class="c" style="left:870px;top:255px;width:20px;text-align:right;padding-right:4px;"><span class="h"><i>1</i><i>0</i></span></div><div class="c" style="left:890px;top:255px;width:20px;text-align:right;padding-right:4px;"><span class="h"><i>7</i></span></div><div class="c" style="left:910px;top:255px;width:20px;text-align:right;padding-right:4px;"><span class="h"><i>7</i></span></div><div class="c" style="left:930px;top:255px;width:20px;text-align:right;padding-right:4px;"><span class="h"><i>9</i></span></div><div class="c" style="left:950px;top:255px;width:20px;text-align:right;padding-right:4px;"><span class="h"><i>1</i><i>0</i></span></div><div class="c" style="left:970px;top:255px;width:20px;text-align:right;padding-right:4px;"><span class="h"><i>5</i></span></div><div class="c" style="left:990px;top:255px;width:54px;text-align:right;padding-right:2px;"><span class="h"><i>6</i><i>8</i><i>0</i></span></div><div class="c" style="left:1044px;top:255px;width:54px;text-align:right;padding-right:2px;"><span class="h"><i>2</i><i>1</i><i>0</i></span></div><div class="rl" style="top:271px;background:#80c0ff"></div><div class="c" style="left:104px;top:272px;width:70px;text-align:left;padding-left:4px;"><span class="h"><i>2</i><i>0</i><i>0</i><i>6</i><i class="s">/</i><i>0</i><i>7</i><i class="s">/</i><i>2</i><i>3</i></span></div><div class="c" style="left:174px;top:272px;width:70px;text-align:left;padding-left:4px;"><span class="h"><i>2</i></span><b class="k">回</b><b class="k">函</b><b class="k">館</b><span class="h"><i>4</i></span><b class="k">日</b></div><div class="c" style="left:244px;top:272px;width:20px;text-align:right;padding-right:7px;"><span class="h"><i>1</i><i>0</i></span></div><div class="c" style="left:264px;top:272px;width:180px;text-align:left;padding-left:1px;"><b class="k">か</b><b class="k">も</b><b class="k">め</b><b class="k">島</b><b class="k">特</b><span class="h"><i>1</i><i>0</i><i>0</i><i>0</i></span></div><div class="c" style="left:444px;top:272px;width:122px;text-align:left;padding-left:1px;"><b class="k">シ</b><b class="k">ュ</b><b class="k">フ</b><b class="k">ル</b><b class="k">ー</b><b class="k">ル</b></div><div class="c" style="left:566px;top:272px;width:20px;text-align:right;padding-right:4px;"><span class="h"><i>9</i></span></div><div class="c" style="left:586px;top:272px;width:42px;text-align:left;padding-left:3px;"><b class="k">芝</b><span class="h"><i>1</i><i>8</i><i>0</i><i>0</i></span></div><div class="c" style="left:628px;top:272px;width:20px;text-align:center;font-size:13px;">B</div><div class="c" style="left:648px;top:272px;width:20px;text-align:center;font-size:13px;">M</div><div class="c" style="left:668px;top:272px;width:48px;text-align:right;padding-right:2px;"><span class="h"><i>5</i><i>5</i><i class="d">.</i><i>0</i><i>K</i><i>g</i></span></div><div class="c" style="left:716px;top:272px;width:20px;text-align:right;padding-right:4px;"><span class="h"><i>6</i></span></div><div class="c" style="left:736px;top:272px;width:48px;text-align:right;padding-right:2px;"><span class="h"><i>1</i><i class="d">.</i><i>5</i><i>3</i><i class="d">.</i><i>9</i></span></div><div class="c" style="left:784px;top:272px;width:33px;text-align:right;padding-right:3px;"><span class="h"><i>3</i><i>8</i><i class="d">.</i><i>1</i></span></div><div class="c" style="left:817px;top:272px;width:33px;text-align:right;padding-right:3px;"><span class="h"><i>3</i><i>7</i><i class="d">.</i><i>4</i></span></div><div class="c" style="left:850px;top:272px;width:20px;text-align:right;padding-right:4px;"><span class="h"><i>2</i></span></div><div class="c" style="left:870px;top:272px;width:20px;text-align:right;padding-right:4px;"><span class="h"><i>2</i></span></div><div class="c" style="left:890px;top:272px;width:20px;text-align:right;padding-right:4px;"><span class="h"><i>2</i></span></div><div class="c" style="left:910px;top:272px;width:20px;text-align:right;padding-right:4px;"><span class="h"><i>2</i></span></div><div class="c" style="left:930px;top:272px;width:20px;text-align:right;padding-right:4px;"><span class="h"><i>3</i></span></div><div class="c" style="left:950px;top:272px;width:20px;text-align:right;padding-right:4px;"><span class="h"><i>4</i></span></div><div class="c" style="left:970px;top:272px;width:20px;text-align:right;padding-right:4px;"><span class="h"><i>2</i></span></div><div class="c" style="left:990px;top:272px;width:54px;text-align:right;padding-right:2px;"><span class="h"><i>1</i><i>6</i><i>2</i><i>0</i></span></div><div class="c" style="left:1044px;top:272px;width:54px;text-align:right;padding-right:2px;"><span class="h"><i>3</i><i>5</i><i>0</i></span></div><div class="rl" style="top:288px;background:#80c0ff"></div><div class="c" style="left:104px;top:289px;width:70px;text-align:left;padding-left:4px;"><span class="h"><i>2</i><i>0</i><i>0</i><i>6</i><i class="s">/</i><i>0</i><i>7</i><i class="s">/</i><i>2</i><i>3</i></span></div><div class="c" style="left:174px;top:289px;width:70px;text-align:left;padding-left:4px;"><span class="h"><i>2</i></span><b class="k">回</b><b class="k">函</b><b class="k">館</b><span class="h"><i>4</i></span><b class="k">日</b></div><div class="c" style="left:244px;top:289px;width:20px;text-align:right;padding-right:7px;"><span class="h"><i>1</i><i>2</i></span></div><div class="c" style="left:264px;top:289px;width:180px;text-align:left;padding-left:1px;"><b class="k">渡</b><b class="k">島</b><b class="k">特</b><b class="k">別</b><b class="k">　</b><span class="h"><i>1</i><i>0</i><i>0</i><i>0</i></span></div><div class="c" style="left:444px;top:289px;width:122px;text-align:left;padding-left:1px;"><b class="k">ナ</b><b class="k">リ</b><b class="k">タ</b><b class="k">プ</b><b class="k">レ</b><b class="k">リ</b><b class="k">ュ</b><b class="k">ー</b><b class="k">ド</b></div><div class="c" style="left:566px;top:289px;width:20px;text-align:right;padding-right:4px;"><span class="h"><i>1</i><i>3</i></span></div><div class="c" style="left:586px;top:289px;width:42px;text-align:left;padding-left:3px;"><b class="k">ダ</b><span class="h"><i>1</i><i>7</i><i>0</i><i>0</i></span></div><div class="c" style="left:648px;top:289px;width:20px;text-align:center;font-size:13px;">H</div><div class="c" style="left:668px;top:289px;width:48px;text-align:right;padding-right:2px;"><span class="h"><i>5</i><i>7</i><i class="d">.</i><i>0</i><i>K</i><i>g</i></span></div><div class="c" style="left:716px;top:289px;width:20px;text-align:right;padding-right:4px;color:#ff0000;"><span class="h"><i>1</i></span></div><div class="c" style="left:736px;top:289px;width:48px;text-align:right;padding-right:2px;"><span class="h"><i>1</i><i class="d">.</i><i>4</i><i>6</i><i class="d">.</i><i>3</i></span></div><div class="c" style="left:784px;top:289px;width:33px;text-align:right;padding-right:3px;"><span class="h"><i>3</i><i>7</i><i class="d">.</i><i>2</i></span></div><div class="c" style="left:817px;top:289px;width:33px;text-align:right;padding-right:3px;"><span class="h"><i>3</i><i>8</i><i class="d">.</i><i>1</i></span></div><div class="c" style="left:850px;top:289px;width:20px;text-align:right;padding-right:4px;color:#ff0000;"><span class="h"><i>9</i></span></div><div class="c" style="left:870px;top:289px;width:20px;text-align:right;padding-right:4px;"><span class="h"><i>1</i><i>0</i></span></div><div class="c" style="left:890px;top:289px;width:20px;text-align:right;padding-right:4px;"><span class="h"><i>3</i></span></div><div class="c" style="left:910px;top:289px;width:20px;text-align:right;padding-right:4px;"><span class="h"><i>2</i></span></div><div class="c" style="left:930px;top:289px;width:20px;text-align:right;padding-right:4px;"><span class="h"><i>6</i></span></div><div class="c" style="left:950px;top:289px;width:20px;text-align:right;padding-right:4px;"><span class="h"><i>2</i></span></div><div class="c" style="left:970px;top:289px;width:20px;text-align:right;padding-right:4px;"><span class="h"><i>4</i></span></div><div class="c" style="left:990px;top:289px;width:54px;text-align:right;padding-right:2px;"><span class="h"><i>3</i><i>1</i><i>0</i></span></div><div class="c" style="left:1044px;top:289px;width:54px;text-align:right;padding-right:2px;"><span class="h"><i>1</i><i>4</i><i>0</i></span></div><div class="rl" style="top:305px;background:#80c0ff"></div><div class="c" style="left:104px;top:306px;width:70px;text-align:left;padding-left:4px;"><span class="h"><i>2</i><i>0</i><i>0</i><i>6</i><i class="s">/</i><i>0</i><i>7</i><i class="s">/</i><i>2</i><i>2</i></span></div><div class="c" style="left:174px;top:306px;width:70px;text-align:left;padding-left:4px;"><span class="h"><i>2</i></span><b class="k">回</b><b class="k">小</b><b class="k">倉</b><span class="h"><i>3</i></span><b class="k">日</b></div><div class="c" style="left:244px;top:306px;width:20px;text-align:right;padding-right:7px;"><span class="h"><i>1</i><i>0</i></span></div><div class="c" style="left:264px;top:306px;width:180px;text-align:left;padding-left:1px;"><b class="k">玄</b><b class="k">海</b><b class="k">特</b><b class="k">別</b><b class="k">　</b><span class="h"><i>1</i><i>0</i><i>0</i><i>0</i></span></div><div class="c" style="left:444px;top:306px;width:122px;text-align:left;padding-left:1px;"><b class="k">ブ</b><b class="k">ラ</b><b class="k">イ</b><b class="k">ト</b><b class="k">ト</b><b class="k">ゥ</b><b class="k">モ</b><b class="k">ロ</b><b class="k">ー</b></div><div class="c" style="left:566px;top:306px;width:20px;text-align:right;padding-right:4px;"><span class="h"><i>1</i><i>2</i></span></div><div class="c" style="left:586px;top:306px;width:42px;text-align:left;padding-left:3px;"><b class="k">芝</b><span class="h"><i>1</i><i>8</i><i>0</i><i>0</i></span></div><div class="c" style="left:628px;top:306px;width:20px;text-align:center;font-size:13px;">A</div><div class="c" style="left:648px;top:306px;width:20px;text-align:center;font-size:13px;">S</div><div class="c" style="left:668px;top:306px;width:48px;text-align:right;padding-right:2px;"><span class="h"><i>5</i><i>7</i><i class="d">.</i><i>0</i><i>K</i><i>g</i></span></div><div class="c" style="left:716px;top:306px;width:20px;text-align:right;padding-right:4px;color:#00a000;"><span class="h"><i>3</i></span></div><div class="c" style="left:736px;top:306px;width:48px;text-align:right;padding-right:2px;"><span class="h"><i>1</i><i class="d">.</i><i>4</i><i>6</i><i class="d">.</i><i>2</i></span></div><div class="c" style="left:784px;top:306px;width:33px;text-align:right;padding-right:3px;"><span class="h"><i>3</i><i>6</i><i class="d">.</i><i>9</i></span></div><div class="c" style="left:817px;top:306px;width:33px;text-align:right;padding-right:3px;"><span class="h"><i>3</i><i>4</i><i class="d">.</i><i>1</i></span></div><div class="c" style="left:850px;top:306px;width:20px;text-align:right;padding-right:4px;color:#ff0000;"><span class="h"><i>7</i></span></div><div class="c" style="left:870px;top:306px;width:20px;text-align:right;padding-right:4px;"><span class="h"><i>8</i></span></div><div class="c" style="left:890px;top:306px;width:20px;text-align:right;padding-right:4px;"><span class="h"><i>8</i></span></div><div class="c" style="left:910px;top:306px;width:20px;text-align:right;padding-right:4px;"><span class="h"><i>6</i></span></div><div class="c" style="left:930px;top:306px;width:20px;text-align:right;padding-right:4px;"><span class="h"><i>4</i></span></div><div class="c" style="left:950px;top:306px;width:20px;text-align:right;padding-right:4px;"><span class="h"><i>1</i><i>0</i></span></div><div class="c" style="left:970px;top:306px;width:20px;text-align:right;padding-right:4px;"><span class="h"><i>8</i></span></div><div class="c" style="left:990px;top:306px;width:54px;text-align:right;padding-right:2px;"><span class="h"><i>4</i><i>3</i><i>0</i></span></div><div class="c" style="left:1044px;top:306px;width:54px;text-align:right;padding-right:2px;"><span class="h"><i>1</i><i>7</i><i>0</i></span></div><div class="rl" style="top:322px;background:#80c0ff"></div><div class="c" style="left:104px;top:323px;width:70px;text-align:left;padding-left:4px;"><span class="h"><i>2</i><i>0</i><i>0</i><i>6</i><i class="s">/</i><i>0</i><i>7</i><i class="s">/</i><i>2</i><i>2</i></span></div><div class="c" style="left:174px;top:323px;width:70px;text-align:left;padding-left:4px;"><span class="h"><i>2</i></span><b class="k">回</b><b class="k">小</b><b class="k">倉</b><span class="h"><i>3</i></span><b class="k">日</b></div><div class="c" style="left:244px;top:323px;width:20px;text-align:right;padding-right:7px;"><span class="h"><i>1</i><i>1</i></span></div><div class="c" style="left:264px;top:323px;width:180px;text-align:left;padding-left:1px;"><b class="k">小</b><b class="k">郡</b><b class="k">特</b><b class="k">別</b><b class="k">　</b><span class="h"><i>1</i><i>0</i><i>0</i><i>0</i></span></div><div class="c" style="left:444px;top:323px;width:122px;text-align:left;padding-left:1px;"><b class="k">マ</b><b class="k">ル</b><b class="k">カ</b><b class="k">ジ</b><b class="k">ー</b><b class="k">ク</b></div><div class="c" style="left:566px;top:323px;width:20px;text-align:right;padding-right:4px;"><span class="h"><i>1</i><i>1</i></span></div><div class="c" style="left:586px;top:323px;width:42px;text-align:left;padding-left:3px;"><b class="k">芝</b><span class="h"><i>1</i><i>2</i><i>0</i><i>0</i></span></div><div class="c" style="left:628px;top:323px;width:20px;text-align:center;font-size:13px;">A</div><div class="c" style="left:648px;top:323px;width:20px;text-align:center;font-size:13px;">H</div><div class="c" style="left:668px;top:323px;width:48px;text-align:right;padding-right:2px;"><span class="h"><i>5</i><i>7</i><i class="d">.</i><i>0</i><i>K</i><i>g</i></span></div><div class="c" style="left:716px;top:323px;width:20px;text-align:right;padding-right:4px;color:#ff0000;"><span class="h"><i>1</i></span></div><div class="c" style="left:736px;top:323px;width:48px;text-align:right;padding-right:2px;"><span class="h"><i>1</i><i class="d">.</i><i>0</i><i>7</i><i class="d">.</i><i>0</i></span></div><div class="c" style="left:784px;top:323px;width:33px;text-align:right;padding-right:3px;"><span class="h"><i>3</i><i>3</i><i class="d">.</i><i>1</i></span></div><div class="c" style="left:817px;top:323px;width:33px;text-align:right;padding-right:3px;"><span class="h"><i>3</i><i>3</i><i class="d">.</i><i>9</i></span></div><div class="c" style="left:850px;top:323px;width:20px;text-align:right;padding-right:4px;"><b class="k">–</b></div><div class="c" style="left:870px;top:323px;width:20px;text-align:right;padding-right:4px;"><span class="h"><i>7</i></span></div><div class="c" style="left:890px;top:323px;width:20px;text-align:right;padding-right:4px;"><span class="h"><i>5</i></span></div><div class="c" style="left:910px;top:323px;width:20px;text-align:right;padding-right:4px;"><span class="h"><i>3</i></span></div><div class="c" style="left:930px;top:323px;width:20px;text-align:right;padding-right:4px;"><span class="h"><i>7</i></span></div><div class="c" style="left:950px;top:323px;width:20px;text-align:right;padding-right:4px;"><span class="h"><i>6</i></span></div><div class="c" style="left:970px;top:323px;width:20px;text-align:right;padding-right:4px;"><span class="h"><i>1</i></span></div><div class="c" style="left:990px;top:323px;width:54px;text-align:right;padding-right:2px;"><span class="h"><i>1</i><i>6</i><i>0</i></span></div><div class="c" style="left:1044px;top:323px;width:54px;text-align:right;padding-right:2px;"><span class="h"><i>1</i><i>0</i><i>0</i></span></div><div class="rl" style="top:339px;background:#80c0ff"></div><div class="c" style="left:104px;top:340px;width:70px;text-align:left;padding-left:4px;"><span class="h"><i>2</i><i>0</i><i>0</i><i>6</i><i class="s">/</i><i>0</i><i>7</i><i class="s">/</i><i>2</i><i>2</i></span></div><div class="c" style="left:174px;top:340px;width:70px;text-align:left;padding-left:4px;"><span class="h"><i>2</i></span><b class="k">回</b><b class="k">新</b><b class="k">潟</b><span class="h"><i>3</i></span><b class="k">日</b></div><div class="c" style="left:244px;top:340px;width:20px;text-align:right;padding-right:7px;"><span class="h"><i>1</i><i>0</i></span></div><div class="c" style="left:264px;top:340px;width:180px;text-align:left;padding-left:1px;"><b class="k">苗</b><b class="k">場</b><b class="k">特</b><b class="k">別</b><b class="k">　</b><span class="h"><i>1</i><i>0</i><i>0</i><i>0</i></span></div><div class="c" style="left:444px;top:340px;width:122px;text-align:left;padding-left:1px;"><b class="k">キ</b><b class="k">ー</b><b class="k">プ</b><b class="k">ザ</b><b class="k">フ</b><b class="k">ェ</b><b class="k">イ</b><b class="k">ス</b></div><div class="c" style="left:566px;top:340px;width:20px;text-align:right;padding-right:4px;"><span class="h"><i>1</i><i>5</i></span></div><div class="c" style="left:586px;top:340px;width:42px;text-align:left;padding-left:3px;"><b class="k">ダ</b><span class="h"><i>1</i><i>2</i><i>0</i><i>0</i></span></div><div class="c" style="left:648px;top:340px;width:20px;text-align:center;font-size:13px;">H</div><div class="c" style="left:668px;top:340px;width:48px;text-align:right;padding-right:2px;"><span class="h"><i>5</i><i>5</i><i class="d">.</i><i>0</i><i>K</i><i>g</i></span></div><div class="c" style="left:716px;top:340px;width:20px;text-align:right;padding-right:4px;color:#00a000;"><span class="h"><i>3</i></span></div><div class="c" style="left:736px;top:340px;width:48px;text-align:right;padding-right:2px;"><span class="h"><i>1</i><i class="d">.</i><i>1</i><i>1</i><i class="d">.</i><i>1</i></span></div><div class="c" style="left:784px;top:340px;width:33px;text-align:right;padding-right:3px;"><span class="h"><i>3</i><i>4</i><i class="d">.</i><i>9</i></span></div><div class="c" style="left:817px;top:340px;width:33px;text-align:right;padding-right:3px;"><span class="h"><i>3</i><i>6</i><i class="d">.</i><i>2</i></span></div><div class="c" style="left:850px;top:340px;width:20px;text-align:right;padding-right:4px;"><b class="k">–</b></div><div class="c" style="left:870px;top:340px;width:20px;text-align:right;padding-right:4px;"><span class="h"><i>1</i><i>0</i></span></div><div class="c" style="left:890px;top:340px;width:20px;text-align:right;padding-right:4px;"><span class="h"><i>1</i><i>0</i></span></div><div class="c" style="left:910px;top:340px;width:20px;text-align:right;padding-right:4px;"><span class="h"><i>9</i></span></div><div class="c" style="left:930px;top:340px;width:20px;text-align:right;padding-right:4px;"><span class="h"><i>1</i><i>0</i></span></div><div class="c" style="left:950px;top:340px;width:20px;text-align:right;padding-right:4px;"><span class="h"><i>6</i></span></div><div class="c" style="left:970px;top:340px;width:20px;text-align:right;padding-right:4px;"><span class="h"><i>8</i></span></div><div class="c" style="left:990px;top:340px;width:54px;text-align:right;padding-right:2px;"><span class="h"><i>6</i><i>6</i><i>0</i></span></div><div class="c" style="left:1044px;top:340px;width:54px;text-align:right;padding-right:2px;"><span class="h"><i>2</i><i>6</i><i>0</i></span></div><div class="rl" style="top:356px;background:#80c0ff"></div><div class="c" style="left:104px;top:357px;width:70px;text-align:left;padding-left:4px;"><span class="h"><i>2</i><i>0</i><i>0</i><i>6</i><i class="s">/</i><i>0</i><i>7</i><i class="s">/</i><i>2</i><i>2</i></span></div><div class="c" style="left:174px;top:357px;width:70px;text-align:left;padding-left:4px;"><span class="h"><i>2</i></span><b class="k">回</b><b class="k">新</b><b class="k">潟</b><span class="h"><i>3</i></span><b class="k">日</b></div><div class="c" style="left:244px;top:357px;width:20px;text-align:right;padding-right:7px;"><span class="h"><i>1</i><i>1</i></span></div><div class="c" style="left:264px;top:357px;width:180px;text-align:left;padding-left:1px;"><b class="k">火</b><b class="k">打</b><b class="k">山</b><b class="k">特</b><b class="k">別</b><span class="h"><i>1</i><i>0</i><i>0</i><i>0</i></span></div><div class="c" style="left:444px;top:357px;width:122px;text-align:left;padding-left:1px;"><b class="k">ジ</b><b class="k">ョ</b><b class="k">イ</b><b class="k">ン</b><b class="k">ト</b><b class="k">ス</b><b class="k">タ</b><b class="k">ー</b><b class="k">ズ</b></div><div class="c" style="left:566px;top:357px;width:20px;text-align:right;padding-right:4px;"><span class="h"><i>1</i><i>8</i></span></div><div class="c" style="left:586px;top:357px;width:42px;text-align:left;padding-left:3px;"><b class="k">芝</b><span class="h"><i>1</i><i>4</i><i>0</i><i>0</i></span></div><div class="c" style="left:628px;top:357px;width:20px;text-align:center;font-size:13px;">A</div><div class="c" style="left:648px;top:357px;width:20px;text-align:center;font-size:13px;">H</div><div class="c" style="left:668px;top:357px;width:48px;text-align:right;padding-right:2px;"><span class="h"><i>5</i><i>7</i><i class="d">.</i><i>5</i><i>K</i><i>g</i></span></div><div class="c" style="left:716px;top:357px;width:20px;text-align:right;padding-right:4px;color:#ff0000;"><span class="h"><i>1</i></span></div><div class="c" style="left:736px;top:357px;width:48px;text-align:right;padding-right:2px;"><span class="h"><i>1</i><i class="d">.</i><i>2</i><i>1</i><i class="d">.</i><i>3</i></span></div><div class="c" style="left:784px;top:357px;width:33px;text-align:right;padding-right:3px;"><span class="h"><i>3</i><i>4</i><i class="d">.</i><i>4</i></span></div><div class="c" style="left:817px;top:357px;width:33px;text-align:right;padding-right:3px;"><span class="h"><i>3</i><i>5</i><i class="d">.</i><i>2</i></span></div><div class="c" style="left:850px;top:357px;width:20px;text-align:right;padding-right:4px;"><b class="k">–</b></div><div class="c" style="left:870px;top:357px;width:20px;text-align:right;padding-right:4px;"><span class="h"><i>6</i></span></div><div class="c" style="left:890px;top:357px;width:20px;text-align:right;padding-right:4px;"><span class="h"><i>6</i></span></div><div class="c" style="left:910px;top:357px;width:20px;text-align:right;padding-right:4px;"><span class="h"><i>4</i></span></div><div class="c" style="left:930px;top:357px;width:20px;text-align:right;padding-right:4px;"><span class="h"><i>1</i><i>2</i></span></div><div class="c" style="left:950px;top:357px;width:20px;text-align:right;padding-right:4px;"><span class="h"><i>1</i><i>4</i></span></div><div class="c" style="left:970px;top:357px;width:20px;text-align:right;padding-right:4px;"><span class="h"><i>4</i></span></div><div class="c" style="left:990px;top:357px;width:54px;text-align:right;padding-right:2px;"><span class="h"><i>3</i><i>4</i><i>0</i></span></div><div class="c" style="left:1044px;top:357px;width:54px;text-align:right;padding-right:2px;"><span class="h"><i>1</i><i>6</i><i>0</i></span></div><div class="rl" style="top:373px;background:#80c0ff"></div><div class="c" style="left:104px;top:374px;width:70px;text-align:left;padding-left:4px;"><span class="h"><i>2</i><i>0</i><i>0</i><i>6</i><i class="s">/</i><i>0</i><i>7</i><i class="s">/</i><i>2</i><i>2</i></span></div><div class="c" style="left:174px;top:374px;width:70px;text-align:left;padding-left:4px;"><span class="h"><i>2</i></span><b class="k">回</b><b class="k">函</b><b class="k">館</b><span class="h"><i>3</i></span><b class="k">日</b></div><div class="c" style="left:244px;top:374px;width:20px;text-align:right;padding-right:7px;"><span class="h"><i>9</i></span></div><div class="c" style="left:264px;top:374px;width:180px;text-align:left;padding-left:1px;"><b class="k">立</b><b class="k">待</b><b class="k">岬</b><b class="k">特</b><b class="k">別</b><span class="h"><i>1</i><i>0</i><i>0</i><i>0</i></span></div><div class="c" style="left:444px;top:374px;width:122px;text-align:left;padding-left:1px;"><b class="k">エ</b><b class="k">ア</b><b class="k">ニ</b><b class="k">ッ</b><b class="k">ク</b><b class="k">ス</b></div><div class="c" style="left:566px;top:374px;width:20px;text-align:right;padding-right:4px;"><span class="h"><i>1</i><i>0</i></span></div><div class="c" style="left:586px;top:374px;width:42px;text-align:left;padding-left:3px;"><b class="k">芝</b><span class="h"><i>1</i><i>2</i><i>0</i><i>0</i></span></div><div class="c" style="left:628px;top:374px;width:20px;text-align:center;font-size:13px;">B</div><div class="c" style="left:648px;top:374px;width:20px;text-align:center;font-size:13px;">H</div><div class="c" style="left:668px;top:374px;width:48px;text-align:right;padding-right:2px;"><span class="h"><i>5</i><i>7</i><i class="d">.</i><i>0</i><i>K</i><i>g</i></span></div><div class="c" style="left:716px;top:374px;width:20px;text-align:right;padding-right:4px;color:#00a000;"><span class="h"><i>3</i></span></div><div class="c" style="left:736px;top:374px;width:48px;text-align:right;padding-right:2px;"><span class="h"><i>1</i><i class="d">.</i><i>1</i><i>0</i><i class="d">.</i><i>4</i></span></div><div class="c" style="left:784px;top:374px;width:33px;text-align:right;padding-right:3px;"><span class="h"><i>3</i><i>4</i><i class="d">.</i><i>4</i></span></div><div class="c" style="left:817px;top:374px;width:33px;text-align:right;padding-right:3px;"><span class="h"><i>3</i><i>6</i><i class="d">.</i><i>0</i></span></div><div class="c" style="left:850px;top:374px;width:20px;text-align:right;padding-right:4px;"><b class="k">–</b></div><div class="c" style="left:870px;top:374px;width:20px;text-align:right;padding-right:4px;"><span class="h"><i>1</i></span></div><div class="c" style="left:890px;top:374px;width:20px;text-align:right;padding-right:4px;"><span class="h"><i>1</i></span></div><div class="c" style="left:910px;top:374px;width:20px;text-align:right;padding-right:4px;"><span class="h"><i>1</i></span></div><div class="c" style="left:930px;top:374px;width:20px;text-align:right;padding-right:4px;"><span class="h"><i>7</i></span></div><div class="c" style="left:950px;top:374px;width:20px;text-align:right;padding-right:4px;"><span class="h"><i>2</i></span></div><div class="c" style="left:970px;top:374px;width:20px;text-align:right;padding-right:4px;"><span class="h"><i>8</i></span></div><div class="c" style="left:990px;top:374px;width:54px;text-align:right;padding-right:2px;"><span class="h"><i>7</i><i>4</i><i>0</i></span></div><div class="c" style="left:1044px;top:374px;width:54px;text-align:right;padding-right:2px;"><span class="h"><i>2</i><i>3</i><i>0</i></span></div><div class="rl" style="top:390px;background:#80c0ff"></div><div class="c" style="left:104px;top:391px;width:70px;text-align:left;padding-left:4px;"><span class="h"><i>2</i><i>0</i><i>0</i><i>6</i><i class="s">/</i><i>0</i><i>7</i><i class="s">/</i><i>1</i><i>6</i></span></div><div class="c" style="left:174px;top:391px;width:70px;text-align:left;padding-left:4px;"><span class="h"><i>2</i></span><b class="k">回</b><b class="k">小</b><b class="k">倉</b><span class="h"><i>2</i></span><b class="k">日</b></div><div class="c" style="left:244px;top:391px;width:20px;text-align:right;padding-right:7px;"><span class="h"><i>9</i></span></div><div class="c" style="left:264px;top:391px;width:180px;text-align:left;padding-left:1px;"><b class="k">桜</b><b class="k">島</b><b class="k">特</b><b class="k">別</b><b class="k">　</b><span class="h"><i>1</i><i>0</i><i>0</i><i>0</i></span></div><div class="c" style="left:444px;top:391px;width:122px;text-align:left;padding-left:1px;"><b class="k">メ</b><b class="k">イ</b><b class="k">シ</b><b class="k">ョ</b><b class="k">ウ</b><b class="k">ボ</b><b class="k">バ</b><b class="k">イ</b></div><div class="c" style="left:566px;top:391px;width:20px;text-align:right;padding-right:4px;"><span class="h"><i>1</i><i>5</i></span></div><div class="c" style="left:586px;top:391px;width:42px;text-align:left;padding-left:3px;"><b class="k">ダ</b><span class="h"><i>1</i><i>7</i><i>0</i><i>0</i></span></div><div class="c" style="left:648px;top:391px;width:20px;text-align:center;font-size:13px;">H</div><div class="c" style="left:668px;top:391px;width:48px;text-align:right;padding-right:2px;"><span class="h"><i>5</i><i>7</i><i class="d">.</i><i>0</i><i>K</i><i>g</i></span></div><div class="c" style="left:716px;top:391px;width:20px;text-align:right;padding-right:4px;"><span class="h"><i>6</i></span></div><div class="c" style="left:736px;top:391px;width:48px;text-align:right;padding-right:2px;"><span class="h"><i>1</i><i class="d">.</i><i>4</i><i>3</i><i class="d">.</i><i>7</i></span></div><div class="c" style="left:784px;top:391px;width:33px;text-align:right;padding-right:3px;"><span class="h"><i>3</i><i>5</i><i class="d">.</i><i>2</i></span></div><div class="c" style="left:817px;top:391px;width:33px;text-align:right;padding-right:3px;"><span class="h"><i>3</i><i>7</i><i class="d">.</i><i>6</i></span></div><div class="c" style="left:850px;top:391px;width:20px;text-align:right;padding-right:4px;"><span class="h"><i>3</i></span></div><div class="c" style="left:870px;top:391px;width:20px;text-align:right;padding-right:4px;"><span class="h"><i>4</i></span></div><div class="c" style="left:890px;top:391px;width:20px;text-align:right;padding-right:4px;"><span class="h"><i>3</i></span></div><div class="c" style="left:910px;top:391px;width:20px;text-align:right;padding-right:4px;"><span class="h"><i>3</i></span></div><div class="c" style="left:930px;top:391px;width:20px;text-align:right;padding-right:4px;"><span class="h"><i>1</i></span></div><div class="c" style="left:950px;top:391px;width:20px;text-align:right;padding-right:4px;"><span class="h"><i>6</i></span></div><div class="c" style="left:970px;top:391px;width:20px;text-align:right;padding-right:4px;"><span class="h"><i>2</i></span></div><div class="c" style="left:990px;top:391px;width:54px;text-align:right;padding-right:2px;"><span class="h"><i>1</i><i>7</i><i>0</i><i>0</i></span></div><div class="c" style="left:1044px;top:391px;width:54px;text-align:right;padding-right:2px;"><span class="h"><i>4</i><i>9</i><i>0</i></span></div><div class="rl" style="top:407px;background:#80c0ff"></div><div class="c" style="left:104px;top:408px;width:70px;text-align:left;padding-left:4px;"><span class="h"><i>2</i><i>0</i><i>0</i><i>6</i><i class="s">/</i><i>0</i><i>7</i><i class="s">/</i><i>1</i><i>6</i></span></div><div class="c" style="left:174px;top:408px;width:70px;text-align:left;padding-left:4px;"><span class="h"><i>2</i></span><b class="k">回</b><b class="k">新</b><b class="k">潟</b><span class="h"><i>2</i></span><b class="k">日</b></div><div class="c" style="left:244px;top:408px;width:20px;text-align:right;padding-right:7px;"><span class="h"><i>1</i><i>0</i></span></div><div class="c" style="left:264px;top:408px;width:180px;text-align:left;padding-left:1px;"><b class="k">麒</b><b class="k">麟</b><b class="k">山</b><b class="k">特</b><b class="k">別</b><span class="h"><i>1</i><i>0</i><i>0</i><i>0</i></span></div><div class="c" style="left:444px;top:408px;width:122px;text-align:left;padding-left:1px;"><b class="k">ト</b><b class="k">ラ</b><b class="k">ス</b><b class="k">ト</b><b class="k">ス</b><b class="k">タ</b><b class="k">ー</b></div><div class="c" style="left:566px;top:408px;width:20px;text-align:right;padding-right:4px;"><span class="h"><i>1</i><i>5</i></span></div><div class="c" style="left:586px;top:408px;width:42px;text-align:left;padding-left:3px;"><b class="k">ダ</b><span class="h"><i>1</i><i>8</i><i>0</i><i>0</i></span></div><div class="c" style="left:648px;top:408px;width:20px;text-align:center;font-size:13px;">M</div><div class="c" style="left:668px;top:408px;width:48px;text-align:right;padding-right:2px;"><span class="h"><i>5</i><i>6</i><i class="d">.</i><i>0</i><i>K</i><i>g</i></span></div><div class="c" style="left:716px;top:408px;width:20px;text-align:right;padding-right:4px;"><span class="h"><i>4</i></span></div><div class="c" style="left:736px;top:408px;width:48px;text-align:right;padding-right:2px;"><span class="h"><i>1</i><i class="d">.</i><i>5</i><i>1</i><i class="d">.</i><i>9</i></span></div><div class="c" style="left:784px;top:408px;width:33px;text-align:right;padding-right:3px;"><span class="h"><i>3</i><i>5</i><i class="d">.</i><i>9</i></span></div><div class="c" style="left:817px;top:408px;width:33px;text-align:right;padding-right:3px;"><span class="h"><i>3</i><i>7</i><i class="d">.</i><i>0</i></span></div><div class="c" style="left:850px;top:408px;width:20px;text-align:right;padding-right:4px;"><span class="h"><i>1</i></span></div><div class="c" style="left:870px;top:408px;width:20px;text-align:right;padding-right:4px;"><span class="h"><i>2</i></span></div><div class="c" style="left:890px;top:408px;width:20px;text-align:right;padding-right:4px;"><span class="h"><i>2</i></span></div><div class="c" style="left:910px;top:408px;width:20px;text-align:right;padding-right:4px;"><span class="h"><i>2</i></span></div><div class="c" style="left:930px;top:408px;width:20px;text-align:right;padding-right:4px;"><span class="h"><i>9</i></span></div><div class="c" style="left:950px;top:408px;width:20px;text-align:right;padding-right:4px;"><span class="h"><i>1</i><i>0</i></span></div><div class="c" style="left:970px;top:408px;width:20px;text-align:right;padding-right:4px;"><span class="h"><i>3</i></span></div><div class="c" style="left:990px;top:408px;width:54px;text-align:right;padding-right:2px;"><span class="h"><i>6</i><i>3</i><i>0</i></span></div><div class="c" style="left:1044px;top:408px;width:54px;text-align:right;padding-right:2px;"><span class="h"><i>2</i><i>1</i><i>0</i></span></div><div class="rl" style="top:424px;background:#80c0ff"></div><div class="c" style="left:104px;top:425px;width:70px;text-align:left;padding-left:4px;"><span class="h"><i>2</i><i>0</i><i>0</i><i>6</i><i class="s">/</i><i>0</i><i>7</i><i class="s">/</i><i>1</i><i>6</i></span></div><div class="c" style="left:174px;top:425px;width:70px;text-align:left;padding-left:4px;"><span class="h"><i>2</i></span><b class="k">回</b><b class="k">函</b><b class="k">館</b><span class="h"><i>2</i></span><b class="k">日</b></div><div class="c" style="left:244px;top:425px;width:20px;text-align:right;padding-right:7px;"><span class="h"><i>1</i><i>0</i></span></div><div class="c" style="left:264px;top:425px;width:180px;text-align:left;padding-left:1px;"><b class="k">松</b><b class="k">前</b><b class="k">特</b><b class="k">別</b><b class="k">　</b><span class="h"><i>1</i><i>0</i><i>0</i><i>0</i></span></div><div class="c" style="left:444px;top:425px;width:122px;text-align:left;padding-left:1px;"><b class="k">メ</b><b class="k">ジ</b><b class="k">ロ</b><b class="k">コ</b><b class="k">ル</b><b class="k">セ</b><b class="k">ア</b></div><div class="c" style="left:566px;top:425px;width:20px;text-align:right;padding-right:4px;"><span class="h"><i>8</i></span></div><div class="c" style="left:586px;top:425px;width:42px;text-align:left;padding-left:3px;"><b class="k">芝</b><span class="h"><i>2</i><i>6</i><i>0</i><i>0</i></span></div><div class="c" style="left:628px;top:425px;width:20px;text-align:center;font-size:13px;">B</div><div class="c" style="left:648px;top:425px;width:20px;text-align:center;font-size:13px;">S</div><div class="c" style="left:668px;top:425px;width:48px;text-align:right;padding-right:2px;"><span class="h"><i>5</i><i>7</i><i class="d">.</i><i>0</i><i>K</i><i>g</i></span></div><div class="c" style="left:716px;top:425px;width:20px;text-align:right;padding-right:4px;color:#0000ff;"><span class="h"><i>2</i></span></div><div class="c" style="left:736px;top:425px;width:48px;text-align:right;padding-right:2px;"><span class="h"><i>2</i><i class="d">.</i><i>4</i><i>4</i><i class="d">.</i><i>9</i></span></div><div class="c" style="left:784px;top:425px;width:33px;text-align:right;padding-right:3px;"><span class="h"><i>3</i><i>8</i><i class="d">.</i><i>4</i></span></div><div class="c" style="left:817px;top:425px;width:33px;text-align:right;padding-right:3px;"><span class="h"><i>3</i><i>6</i><i class="d">.</i><i>1</i></span></div><div class="c" style="left:850px;top:425px;width:20px;text-align:right;padding-right:4px;"><span class="h"><i>1</i></span></div><div class="c" style="left:870px;top:425px;width:20px;text-align:right;padding-right:4px;"><span class="h"><i>1</i></span></div><div class="c" style="left:890px;top:425px;width:20px;text-align:right;padding-right:4px;"><span class="h"><i>1</i></span></div><div class="c" style="left:910px;top:425px;width:20px;text-align:right;padding-right:4px;"><span class="h"><i>1</i></span></div><div class="c" style="left:930px;top:425px;width:20px;text-align:right;padding-right:4px;"><span class="h"><i>8</i></span></div><div class="c" style="left:950px;top:425px;width:20px;text-align:right;padding-right:4px;"><span class="h"><i>1</i></span></div><div class="c" style="left:970px;top:425px;width:20px;text-align:right;padding-right:4px;"><span class="h"><i>2</i></span></div><div class="c" style="left:990px;top:425px;width:54px;text-align:right;padding-right:2px;"><span class="h"><i>2</i><i>9</i><i>0</i></span></div><div class="c" style="left:1044px;top:425px;width:54px;text-align:right;padding-right:2px;"><span class="h"><i>1</i><i>4</i><i>0</i></span></div><div class="rl" style="top:441px;background:#80c0ff"></div><div class="c" style="left:104px;top:442px;width:70px;text-align:left;padding-left:4px;"><span class="h"><i>2</i><i>0</i><i>0</i><i>6</i><i class="s">/</i><i>0</i><i>7</i><i class="s">/</i><i>1</i><i>5</i></span></div><div class="c" style="left:174px;top:442px;width:70px;text-align:left;padding-left:4px;"><span class="h"><i>2</i></span><b class="k">回</b><b class="k">小</b><b class="k">倉</b><span class="h"><i>1</i></span><b class="k">日</b></div><div class="c" style="left:244px;top:442px;width:20px;text-align:right;padding-right:7px;"><span class="h"><i>1</i><i>0</i></span></div><div class="c" style="left:264px;top:442px;width:180px;text-align:left;padding-left:1px;"><b class="k">西</b><b class="k">日</b><b class="k">本</b><b class="k">ス</b><b class="k">ポ</b><span class="h"><i>1</i><i>0</i><i>0</i><i>0</i></span></div><div class="c" style="left:444px;top:442px;width:122px;text-align:left;padding-left:1px;"><b class="k">モ</b><b class="k">ン</b><b class="k">ロ</b><b class="k">ー</b><b class="k">ブ</b><b class="k">ロ</b><b class="k">ン</b><b class="k">ド</b></div><div class="c" style="left:566px;top:442px;width:20px;text-align:right;padding-right:4px;"><span class="h"><i>1</i><i>5</i></span></div><div class="c" style="left:586px;top:442px;width:42px;text-align:left;padding-left:3px;"><b class="k">芝</b><span class="h"><i>1</i><i>2</i><i>0</i><i>0</i></span></div><div class="c" style="left:628px;top:442px;width:20px;text-align:center;font-size:13px;">A</div><div class="c" style="left:648px;top:442px;width:20px;text-align:center;font-size:13px;">H</div><div class="c" style="left:668px;top:442px;width:48px;text-align:right;padding-right:2px;"><span class="h"><i>5</i><i>5</i><i class="d">.</i><i>5</i><i>K</i><i>g</i></span></div><div class="c" style="left:716px;top:442px;width:20px;text-align:right;padding-right:4px;color:#00a000;"><span class="h"><i>3</i></span></div><div class="c" style="left:736px;top:442px;width:48px;text-align:right;padding-right:2px;"><span class="h"><i>1</i><i class="d">.</i><i>0</i><i>7</i><i class="d">.</i><i>3</i></span></div><div class="c" style="left:784px;top:442px;width:33px;text-align:right;padding-right:3px;"><span class="h"><i>3</i><i>3</i><i class="d">.</i><i>4</i></span></div><div class="c" style="left:817px;top:442px;width:33px;text-align:right;padding-right:3px;"><span class="h"><i>3</i><i>3</i><i class="d">.</i><i>9</i></span></div><div class="c" style="left:850px;top:442px;width:20px;text-align:right;padding-right:4px;"><b class="k">–</b></div><div class="c" style="left:870px;top:442px;width:20px;text-align:right;padding-right:4px;"><span class="h"><i>4</i></span></div><div class="c" style="left:890px;top:442px;width:20px;text-align:right;padding-right:4px;"><span class="h"><i>4</i></span></div><div class="c" style="left:910px;top:442px;width:20px;text-align:right;padding-right:4px;"><span class="h"><i>4</i></span></div><div class="c" style="left:930px;top:442px;width:20px;text-align:right;padding-right:4px;"><span class="h"><i>1</i><i>2</i></span></div><div class="c" style="left:950px;top:442px;width:20px;text-align:right;padding-right:4px;"><span class="h"><i>3</i></span></div><div class="c" style="left:970px;top:442px;width:20px;text-align:right;padding-right:4px;"><span class="h"><i>4</i></span></div><div class="c" style="left:990px;top:442px;width:54px;text-align:right;padding-right:2px;"><span class="h"><i>6</i><i>9</i><i>0</i></span></div><div class="c" style="left:1044px;top:442px;width:54px;text-align:right;padding-right:2px;"><span class="h"><i>1</i><i>9</i><i>0</i></span></div><div class="rl" style="top:458px;background:#80c0ff"></div><div class="c" style="left:104px;top:459px;width:70px;text-align:left;padding-left:4px;"><span class="h"><i>2</i><i>0</i><i>0</i><i>6</i><i class="s">/</i><i>0</i><i>7</i><i class="s">/</i><i>1</i><i>5</i></span></div><div class="c" style="left:174px;top:459px;width:70px;text-align:left;padding-left:4px;"><span class="h"><i>2</i></span><b class="k">回</b><b class="k">新</b><b class="k">潟</b><span class="h"><i>1</i></span><b class="k">日</b></div><div class="c" style="left:244px;top:459px;width:20px;text-align:right;padding-right:7px;"><span class="h"><i>9</i></span></div><div class="c" style="left:264px;top:459px;width:180px;text-align:left;padding-left:1px;"><b class="k">疾</b><b class="k">風</b><b class="k">特</b><b class="k">別</b><b class="k">　</b><span class="h"><i>1</i><i>0</i><i>0</i><i>0</i></span></div><div class="c" style="left:444px;top:459px;width:122px;text-align:left;padding-left:1px;"><b class="k">コ</b><b class="k">ス</b><b class="k">モ</b><b class="k">フ</b><b class="k">ォ</b><b class="k">ー</b><b class="k">チ</b><b class="k">ュ</b><b class="k">ン</b></div><div class="c" style="left:566px;top:459px;width:20px;text-align:right;padding-right:4px;"><span class="h"><i>8</i></span></div><div class="c" style="left:586px;top:459px;width:42px;text-align:left;padding-left:3px;"><b class="k">芝</b><span class="h"><i>1</i><i>0</i><i>0</i><i>0</i></span></div><div class="c" style="left:628px;top:459px;width:20px;text-align:center;font-size:13px;">A</div><div class="c" style="left:648px;top:459px;width:20px;text-align:center;font-size:13px;">M</div><div class="c" style="left:668px;top:459px;width:48px;text-align:right;padding-right:2px;"><span class="h"><i>5</i><i>5</i><i class="d">.</i><i>0</i><i>K</i><i>g</i></span></div><div class="c" style="left:716px;top:459px;width:20px;text-align:right;padding-right:4px;color:#0000ff;"><span class="h"><i>2</i></span></div><div class="c" style="left:736px;top:459px;width:48px;text-align:right;padding-right:2px;"><span class="h"><i>5</i><i>5</i><i class="d">.</i><i>4</i></span></div><div class="c" style="left:784px;top:459px;width:33px;text-align:right;padding-right:3px;"><span class="h"><i>0</i><i class="d">.</i><i>0</i></span></div><div class="c" style="left:817px;top:459px;width:33px;text-align:right;padding-right:3px;"><span class="h"><i>3</i><i>2</i><i class="d">.</i><i>9</i></span></div><div class="c" style="left:850px;top:459px;width:20px;text-align:right;padding-right:4px;"><b class="k">–</b></div><div class="c" style="left:870px;top:459px;width:20px;text-align:right;padding-right:4px;"><b class="k">–</b></div><div class="c" style="left:890px;top:459px;width:20px;text-align:right;padding-right:4px;"><b class="k">–</b></div><div class="c" style="left:910px;top:459px;width:20px;text-align:right;padding-right:4px;"><span class="h"><i>2</i></span></div><div class="c" style="left:930px;top:459px;width:20px;text-align:right;padding-right:4px;"><span class="h"><i>1</i></span></div><div class="c" style="left:950px;top:459px;width:20px;text-align:right;padding-right:4px;"><span class="h"><i>5</i></span></div><div class="c" style="left:970px;top:459px;width:20px;text-align:right;padding-right:4px;"><span class="h"><i>4</i></span></div><div class="c" style="left:990px;top:459px;width:54px;text-align:right;padding-right:2px;"><span class="h"><i>2</i><i>9</i><i>0</i></span></div><div class="c" style="left:1044px;top:459px;width:54px;text-align:right;padding-right:2px;"><span class="h"><i>1</i><i>2</i><i>0</i></span></div><div class="rl" style="top:475px;background:#80c0ff"></div><div class="c" style="left:104px;top:476px;width:70px;text-align:left;padding-left:4px;"><span class="h"><i>2</i><i>0</i><i>0</i><i>6</i><i class="s">/</i><i>0</i><i>7</i><i class="s">/</i><i>1</i><i>5</i></span></div><div class="c" style="left:174px;top:476px;width:70px;text-align:left;padding-left:4px;"><span class="h"><i>2</i></span><b class="k">回</b><b class="k">新</b><b class="k">潟</b><span class="h"><i>1</i></span><b class="k">日</b></div><div class="c" style="left:244px;top:476px;width:20px;text-align:right;padding-right:7px;"><span class="h"><i>1</i><i>1</i></span></div><div class="c" style="left:264px;top:476px;width:180px;text-align:left;padding-left:1px;"><b class="k">豊</b><b class="k">栄</b><b class="k">特</b><b class="k">別</b><b class="k">　</b><span class="h"><i>1</i><i>0</i><i>0</i><i>0</i></span></div><div class="c" style="left:444px;top:476px;width:122px;text-align:left;padding-left:1px;"><b class="k">サ</b><b class="k">イ</b><b class="k">レ</b><b class="k">ン</b><b class="k">ト</b><b class="k">プ</b><b class="k">ラ</b><b class="k">イ</b><b class="k">ド</b></div><div class="c" style="left:566px;top:476px;width:20px;text-align:right;padding-right:4px;"><span class="h"><i>1</i><i>5</i></span></div><div class="c" style="left:586px;top:476px;width:42px;text-align:left;padding-left:3px;"><b class="k">芝</b><span class="h"><i>1</i><i>6</i><i>0</i><i>0</i></span></div><div class="c" style="left:628px;top:476px;width:20px;text-align:center;font-size:13px;">A</div><div class="c" style="left:648px;top:476px;width:20px;text-align:center;font-size:13px;">S</div><div class="c" style="left:668px;top:476px;width:48px;text-align:right;padding-right:2px;"><span class="h"><i>5</i><i>4</i><i class="d">.</i><i>0</i><i>K</i><i>g</i></span></div><div class="c" style="left:716px;top:476px;width:20px;text-align:right;padding-right:4px;color:#ff0000;"><span class="h"><i>1</i></span></div><div class="c" style="left:736px;top:476px;width:48px;text-align:right;padding-right:2px;"><span class="h"><i>1</i><i class="d">.</i><i>3</i><i>4</i><i class="d">.</i><i>4</i></span></div><div class="c" style="left:784px;top:476px;width:33px;text-align:right;padding-right:3px;"><span class="h"><i>3</i><i>6</i><i class="d">.</i><i>4</i></span></div><div class="c" style="left:817px;top:476px;width:33px;text-align:right;padding-right:3px;"><span class="h"><i>3</i><i>4</i><i class="d">.</i><i>0</i></span></div><div class="c" style="left:850px;top:476px;width:20px;text-align:right;padding-right:4px;"><b class="k">–</b></div><div class="c" style="left:870px;top:476px;width:20px;text-align:right;padding-right:4px;"><span class="h"><i>1</i></span></div><div class="c" style="left:890px;top:476px;width:20px;text-align:right;padding-right:4px;"><span class="h"><i>1</i></span></div><div class="c" style="left:910px;top:476px;width:20px;text-align:right;padding-right:4px;"><span class="h"><i>1</i></span></div><div class="c" style="left:930px;top:476px;width:20px;text-align:right;padding-right:4px;"><span class="h"><i>4</i></span></div><div class="c" style="left:950px;top:476px;width:20px;text-align:right;padding-right:4px;"><span class="h"><i>7</i></span></div><div class="c" style="left:970px;top:476px;width:20px;text-align:right;padding-right:4px;"><span class="h"><i>1</i><i>2</i></span></div><div class="c" style="left:990px;top:476px;width:54px;text-align:right;padding-right:2px;"><span class="h"><i>2</i><i>6</i><i>0</i></span></div><div class="c" style="left:1044px;top:476px;width:54px;text-align:right;padding-right:2px;"><span class="h"><i>1</i><i>4</i><i>0</i></span></div><div class="rl" style="top:492px;background:#80c0ff"></div><div class="c" style="left:104px;top:493px;width:70px;text-align:left;padding-left:4px;"><span class="h"><i>2</i><i>0</i><i>0</i><i>6</i><i class="s">/</i><i>0</i><i>7</i><i class="s">/</i><i>1</i><i>5</i></span></div><div class="c" style="left:174px;top:493px;width:70px;text-align:left;padding-left:4px;"><span class="h"><i>2</i></span><b class="k">回</b><b class="k">函</b><b class="k">館</b><span class="h"><i>1</i></span><b class="k">日</b></div><div class="c" style="left:244px;top:493px;width:20px;text-align:right;padding-right:7px;"><span class="h"><i>9</i></span></div><div class="c" style="left:264px;top:493px;width:180px;text-align:left;padding-left:1px;"><b class="k">道</b><b class="k">新</b><b class="k">ス</b><b class="k">ポ</b><b class="k">ー</b><span class="h"><i>1</i><i>0</i><i>0</i><i>0</i></span></div><div class="c" style="left:444px;top:493px;width:122px;text-align:left;padding-left:1px;"><b class="k">メ</b><b class="k">ジ</b><b class="k">ロ</b><b class="k">モ</b><b class="k">ー</b><b class="k">ガ</b><b class="k">ン</b></div><div class="c" style="left:566px;top:493px;width:20px;text-align:right;padding-right:4px;"><span class="h"><i>1</i><i>6</i></span></div><div class="c" style="left:586px;top:493px;width:42px;text-align:left;padding-left:3px;"><b class="k">芝</b><span class="h"><i>1</i><i>2</i><i>0</i><i>0</i></span></div><div class="c" style="left:628px;top:493px;width:20px;text-align:center;font-size:13px;">B</div><div class="c" style="left:648px;top:493px;width:20px;text-align:center;font-size:13px;">H</div><div class="c" style="left:668px;top:493px;width:48px;text-align:right;padding-right:2px;"><span class="h"><i>5</i><i>5</i><i class="d">.</i><i>0</i><i>K</i><i>g</i></span></div><div class="c" style="left:716px;top:493px;width:20px;text-align:right;padding-right:4px;"><span class="h"><i>7</i></span></div><div class="c" style="left:736px;top:493px;width:48px;text-align:right;padding-right:2px;"><span class="h"><i>1</i><i class="d">.</i><i>1</i><i>0</i><i class="d">.</i><i>5</i></span></div><div class="c" style="left:784px;top:493px;width:33px;text-align:right;padding-right:3px;"><span class="h"><i>3</i><i>5</i><i class="d">.</i><i>0</i></span></div><div class="c" style="left:817px;top:493px;width:33px;text-align:right;padding-right:3px;"><span class="h"><i>3</i><i>5</i><i class="d">.</i><i>5</i></span></div><div class="c" style="left:850px;top:493px;width:20px;text-align:right;padding-right:4px;"><b class="k">–</b></div><div class="c" style="left:870px;top:493px;width:20px;text-align:right;padding-right:4px;"><span class="h"><i>1</i><i>0</i></span></div><div class="c" style="left:890px;top:493px;width:20px;text-align:right;padding-right:4px;"><span class="h"><i>9</i></span></div><div class="c" style="left:910px;top:493px;width:20px;text-align:right;padding-right:4px;"><span class="h"><i>8</i></span></div><div class="c" style="left:930px;top:493px;width:20px;text-align:right;padding-right:4px;"><span class="h"><i>9</i></span></div><div class="c" style="left:950px;top:493px;width:20px;text-align:right;padding-right:4px;"><span class="h"><i>1</i><i>0</i></span></div><div class="c" style="left:970px;top:493px;width:20px;text-align:right;padding-right:4px;"><span class="h"><i>1</i><i>1</i></span></div><div class="c" style="left:990px;top:493px;width:54px;text-align:right;padding-right:2px;"><span class="h"><i>1</i><i>4</i><i>8</i><i>0</i></span></div><div class="c" style="left:1044px;top:493px;width:54px;text-align:right;padding-right:2px;"><span class="h"><i>3</i><i>6</i><i>0</i></span></div><div class="rl" style="top:509px;background:#80c0ff"></div><div class="c" style="left:104px;top:510px;width:70px;text-align:left;padding-left:4px;"><span class="h"><i>2</i><i>0</i><i>0</i><i>6</i><i class="s">/</i><i>0</i><i>7</i><i class="s">/</i><i>1</i><i>5</i></span></div><div class="c" style="left:174px;top:510px;width:70px;text-align:left;padding-left:4px;"><span class="h"><i>2</i></span><b class="k">回</b><b class="k">函</b><b class="k">館</b><span class="h"><i>1</i></span><b class="k">日</b></div><div class="c" style="left:244px;top:510px;width:20px;text-align:right;padding-right:7px;"><span class="h"><i>1</i><i>1</i></span></div><div class="c" style="left:264px;top:510px;width:180px;text-align:left;padding-left:1px;"><b class="k">駒</b><b class="k">場</b><b class="k">特</b><b class="k">別</b><b class="k">　</b><span class="h"><i>1</i><i>0</i><i>0</i><i>0</i></span></div><div class="c" style="left:444px;top:510px;width:122px;text-align:left;padding-left:1px;"><b class="k">テ</b><b class="k">ン</b><b class="k">カ</b><b class="k">タ</b><b class="k">イ</b><b class="k">ヘ</b><b class="k">イ</b></div><div class="c" style="left:566px;top:510px;width:20px;text-align:right;padding-right:4px;"><span class="h"><i>1</i><i>3</i></span></div><div class="c" style="left:586px;top:510px;width:42px;text-align:left;padding-left:3px;"><b class="k">ダ</b><span class="h"><i>1</i><i>7</i><i>0</i><i>0</i></span></div><div class="c" style="left:648px;top:510px;width:20px;text-align:center;font-size:13px;">M</div><div class="c" style="left:668px;top:510px;width:48px;text-align:right;padding-right:2px;"><span class="h"><i>5</i><i>7</i><i class="d">.</i><i>0</i><i>K</i><i>g</i></span></div><div class="c" style="left:716px;top:510px;width:20px;text-align:right;padding-right:4px;"><span class="h"><i>7</i></span></div><div class="c" style="left:736px;top:510px;width:48px;text-align:right;padding-right:2px;"><span class="h"><i>1</i><i class="d">.</i><i>4</i><i>6</i><i class="d">.</i><i>2</i></span></div><div class="c" style="left:784px;top:510px;width:33px;text-align:right;padding-right:3px;"><span class="h"><i>3</i><i>6</i><i class="d">.</i><i>9</i></span></div><div class="c" style="left:817px;top:510px;width:33px;text-align:right;padding-right:3px;"><span class="h"><i>3</i><i>8</i><i class="d">.</i><i>0</i></span></div><div class="c" style="left:850px;top:510px;width:20px;text-align:right;padding-right:4px;"><span class="h"><i>6</i></span></div><div class="c" style="left:870px;top:510px;width:20px;text-align:right;padding-right:4px;"><span class="h"><i>7</i></span></div><div class="c" style="left:890px;top:510px;width:20px;text-align:right;padding-right:4px;"><span class="h"><i>4</i></span></div><div class="c" style="left:910px;top:510px;width:20px;text-align:right;padding-right:4px;"><span class="h"><i>3</i></span></div><div class="c" style="left:930px;top:510px;width:20px;text-align:right;padding-right:4px;"><span class="h"><i>4</i></span></div><div class="c" style="left:950px;top:510px;width:20px;text-align:right;padding-right:4px;"><span class="h"><i>9</i></span></div><div class="c" style="left:970px;top:510px;width:20px;text-align:right;padding-right:4px;"><span class="h"><i>3</i></span></div><div class="c" style="left:990px;top:510px;width:54px;text-align:right;padding-right:2px;"><span class="h"><i>1</i><i>7</i><i>5</i><i>0</i></span></div><div class="c" style="left:1044px;top:510px;width:54px;text-align:right;padding-right:2px;"><span class="h"><i>3</i><i>8</i><i>0</i></span></div><div class="rl" style="top:526px;background:#80c0ff"></div><div class="c" style="left:104px;top:527px;width:70px;text-align:left;padding-left:4px;"><span class="h"><i>2</i><i>0</i><i>0</i><i>6</i><i class="s">/</i><i>0</i><i>7</i><i class="s">/</i><i>0</i><i>9</i></span></div><div class="c" style="left:174px;top:527px;width:70px;text-align:left;padding-left:4px;"><span class="h"><i>4</i></span><b class="k">回</b><b class="k">京</b><b class="k">都</b><span class="h"><i>8</i></span><b class="k">日</b></div><div class="c" style="left:244px;top:527px;width:20px;text-align:right;padding-right:7px;"><span class="h"><i>9</i></span></div><div class="c" style="left:264px;top:527px;width:180px;text-align:left;padding-left:1px;"><b class="k">雲</b><b class="k">ヶ</b><b class="k">畑</b><b class="k">特</b><b class="k">別</b><span class="h"><i>1</i><i>0</i><i>0</i><i>0</i></span></div><div class="c" style="left:444px;top:527px;width:122px;text-align:left;padding-left:1px;"><b class="k">サ</b><b class="k">ン</b><b class="k">キ</b><b class="k">ン</b><b class="k">バ</b><b class="k">ス</b><b class="k">タ</b><b class="k">ー</b></div><div class="c" style="left:566px;top:527px;width:20px;text-align:right;padding-right:4px;"><span class="h"><i>9</i></span></div><div class="c" style="left:586px;top:527px;width:42px;text-align:left;padding-left:3px;"><b class="k">芝</b><span class="h"><i>1</i><i>6</i><i>0</i><i>0</i></span></div><div class="c" style="left:628px;top:527px;width:20px;text-align:center;font-size:13px;">D</div><div class="c" style="left:648px;top:527px;width:20px;text-align:center;font-size:13px;">M</div><div class="c" style="left:668px;top:527px;width:48px;text-align:right;padding-right:2px;"><span class="h"><i>5</i><i>7</i><i class="d">.</i><i>0</i><i>K</i><i>g</i></span></div><div class="c" style="left:716px;top:527px;width:20px;text-align:right;padding-right:4px;"><span class="h"><i>4</i></span></div><div class="c" style="left:736px;top:527px;width:48px;text-align:right;padding-right:2px;"><span class="h"><i>1</i><i class="d">.</i><i>3</i><i>4</i><i class="d">.</i><i>8</i></span></div><div class="c" style="left:784px;top:527px;width:33px;text-align:right;padding-right:3px;"><span class="h"><i>3</i><i>5</i><i class="d">.</i><i>6</i></span></div><div class="c" style="left:817px;top:527px;width:33px;text-align:right;padding-right:3px;"><span class="h"><i>3</i><i>6</i><i class="d">.</i><i>0</i></span></div><div class="c" style="left:850px;top:527px;width:20px;text-align:right;padding-right:4px;"><b class="k">–</b></div><div class="c" style="left:870px;top:527px;width:20px;text-align:right;padding-right:4px;"><span class="h"><i>3</i></span></div><div class="c" style="left:890px;top:527px;width:20px;text-align:right;padding-right:4px;"><span class="h"><i>3</i></span></div><div class="c" style="left:910px;top:527px;width:20px;text-align:right;padding-right:4px;"><span class="h"><i>2</i></span></div><div class="c" style="left:930px;top:527px;width:20px;text-align:right;padding-right:4px;"><span class="h"><i>9</i></span></div><div class="c" style="left:950px;top:527px;width:20px;text-align:right;padding-right:4px;"><span class="h"><i>4</i></span></div><div class="c" style="left:970px;top:527px;width:20px;text-align:right;padding-right:4px;"><span class="h"><i>6</i></span></div><div class="c" style="left:990px;top:527px;width:54px;text-align:right;padding-right:2px;"><span class="h"><i>5</i><i>6</i><i>0</i></span></div><div class="c" style="left:1044px;top:527px;width:54px;text-align:right;padding-right:2px;"><span class="h"><i>1</i><i>5</i><i>0</i></span></div><div class="rl" style="top:543px;background:#80c0ff"></div><div class="c" style="left:104px;top:544px;width:70px;text-align:left;padding-left:4px;"><span class="h"><i>2</i><i>0</i><i>0</i><i>6</i><i class="s">/</i><i>0</i><i>7</i><i class="s">/</i><i>0</i><i>9</i></span></div><div class="c" style="left:174px;top:544px;width:70px;text-align:left;padding-left:4px;"><span class="h"><i>2</i></span><b class="k">回</b><b class="k">福</b><b class="k">島</b><span class="h"><i>8</i></span><b class="k">日</b></div><div class="c" style="left:244px;top:544px;width:20px;text-align:right;padding-right:7px;"><span class="h"><i>1</i><i>0</i></span></div><div class="c" style="left:264px;top:544px;width:180px;text-align:left;padding-left:1px;"><b class="k">彦</b><b class="k">星</b><b class="k">賞</b><b class="k">　</b><b class="k">　</b><span class="h"><i>1</i><i>0</i><i>0</i><i>0</i></span></div><div class="c" style="left:444px;top:544px;width:122px;text-align:left;padding-left:1px;"><b class="k">エ</b><b class="k">イ</b><b class="k">シ</b><b class="k">ン</b><b class="k">ラ</b><b class="k">ー</b><b class="k">ジ</b><b class="k">ヒ</b><b class="k">ル</b></div><div class="c" style="left:566px;top:544px;width:20px;text-align:right;padding-right:4px;"><span class="h"><i>1</i><i>5</i></span></div><div class="c" style="left:586px;top:544px;width:42px;text-align:left;padding-left:3px;"><b class="k">ダ</b><span class="h"><i>1</i><i>7</i><i>0</i><i>0</i></span></div><div class="c" style="left:648px;top:544px;width:20px;text-align:center;font-size:13px;">M</div><div class="c" style="left:668px;top:544px;width:48px;text-align:right;padding-right:2px;"><span class="h"><i>5</i><i>7</i><i class="d">.</i><i>0</i><i>K</i><i>g</i></span></div><div class="c" style="left:716px;top:544px;width:20px;text-align:right;padding-right:4px;color:#ff0000;"><span class="h"><i>1</i></span></div><div class="c" style="left:736px;top:544px;width:48px;text-align:right;padding-right:2px;"><span class="h"><i>1</i><i class="d">.</i><i>4</i><i>5</i><i class="d">.</i><i>0</i></span></div><div class="c" style="left:784px;top:544px;width:33px;text-align:right;padding-right:3px;"><span class="h"><i>3</i><i>7</i><i class="d">.</i><i>2</i></span></div><div class="c" style="left:817px;top:544px;width:33px;text-align:right;padding-right:3px;"><span class="h"><i>3</i><i>6</i><i class="d">.</i><i>7</i></span></div><div class="c" style="left:850px;top:544px;width:20px;text-align:right;padding-right:4px;"><span class="h"><i>1</i></span></div><div class="c" style="left:870px;top:544px;width:20px;text-align:right;padding-right:4px;"><span class="h"><i>1</i></span></div><div class="c" style="left:890px;top:544px;width:20px;text-align:right;padding-right:4px;"><span class="h"><i>1</i></span></div><div class="c" style="left:910px;top:544px;width:20px;text-align:right;padding-right:4px;"><span class="h"><i>1</i></span></div><div class="c" style="left:930px;top:544px;width:20px;text-align:right;padding-right:4px;"><span class="h"><i>1</i><i>0</i></span></div><div class="c" style="left:950px;top:544px;width:20px;text-align:right;padding-right:4px;"><span class="h"><i>5</i></span></div><div class="c" style="left:970px;top:544px;width:20px;text-align:right;padding-right:4px;"><span class="h"><i>1</i><i>3</i></span></div><div class="c" style="left:990px;top:544px;width:54px;text-align:right;padding-right:2px;"><span class="h"><i>2</i><i>3</i><i>0</i></span></div><div class="c" style="left:1044px;top:544px;width:54px;text-align:right;padding-right:2px;"><span class="h"><i>1</i><i>6</i><i>0</i></span></div><div class="rl" style="top:560px;background:#80c0ff"></div><div class="c" style="left:104px;top:561px;width:70px;text-align:left;padding-left:4px;"><span class="h"><i>2</i><i>0</i><i>0</i><i>6</i><i class="s">/</i><i>0</i><i>7</i><i class="s">/</i><i>0</i><i>9</i></span></div><div class="c" style="left:174px;top:561px;width:70px;text-align:left;padding-left:4px;"><span class="h"><i>2</i></span><b class="k">回</b><b class="k">福</b><b class="k">島</b><span class="h"><i>8</i></span><b class="k">日</b></div><div class="c" style="left:244px;top:561px;width:20px;text-align:right;padding-right:7px;"><span class="h"><i>1</i><i>2</i></span></div><div class="c" style="left:264px;top:561px;width:180px;text-align:left;padding-left:1px;"><b class="k">尾</b><b class="k">瀬</b><b class="k">特</b><b class="k">別</b><b class="k">　</b><span class="h"><i>1</i><i>0</i><i>0</i><i>0</i></span></div><div class="c" style="left:444px;top:561px;width:122px;text-align:left;padding-left:1px;"><b class="k">タ</b><b class="k">イ</b><b class="k">キ</b><b class="k">エ</b><b class="k">ン</b><b class="k">デ</b><b class="k">バ</b><b class="k">ー</b></div><div class="c" style="left:566px;top:561px;width:20px;text-align:right;padding-right:4px;"><span class="h"><i>1</i><i>2</i></span></div><div class="c" style="left:586px;top:561px;width:42px;text-align:left;padding-left:3px;"><b class="k">芝</b><span class="h"><i>1</i><i>2</i><i>0</i><i>0</i></span></div><div class="c" style="left:628px;top:561px;width:20px;text-align:center;font-size:13px;">B</div><div class="c" style="left:648px;top:561px;width:20px;text-align:center;font-size:13px;">M</div><div class="c" style="left:668px;top:561px;width:48px;text-align:right;padding-right:2px;"><span class="h"><i>5</i><i>5</i><i class="d">.</i><i>0</i><i>K</i><i>g</i></span></div><div class="c" style="left:716px;top:561px;width:20px;text-align:right;padding-right:4px;color:#00a000;"><span class="h"><i>3</i></span></div><div class="c" style="left:736px;top:561px;width:48px;text-align:right;padding-right:2px;"><span class="h"><i>1</i><i class="d">.</i><i>0</i><i>9</i><i class="d">.</i><i>1</i></span></div><div class="c" style="left:784px;top:561px;width:33px;text-align:right;padding-right:3px;"><span class="h"><i>3</i><i>4</i><i class="d">.</i><i>1</i></span></div><div class="c" style="left:817px;top:561px;width:33px;text-align:right;padding-right:3px;"><span class="h"><i>3</i><i>5</i><i class="d">.</i><i>0</i></span></div><div class="c" style="left:850px;top:561px;width:20px;text-align:right;padding-right:4px;"><b class="k">–</b></div><div class="c" style="left:870px;top:561px;width:20px;text-align:right;padding-right:4px;"><span class="h"><i>1</i></span></div><div class="c" style="left:890px;top:561px;width:20px;text-align:right;padding-right:4px;"><span class="h"><i>1</i></span></div><div class="c" style="left:910px;top:561px;width:20px;text-align:right;padding-right:4px;"><span class="h"><i>1</i></span></div><div class="c" style="left:930px;top:561px;width:20px;text-align:right;padding-right:4px;"><span class="h"><i>2</i></span></div><div class="c" style="left:950px;top:561px;width:20px;text-align:right;padding-right:4px;"><span class="h"><i>8</i></span></div><div class="c" style="left:970px;top:561px;width:20px;text-align:right;padding-right:4px;"><span class="h"><i>6</i></span></div><div class="c" style="left:990px;top:561px;width:54px;text-align:right;padding-right:2px;"><span class="h"><i>7</i><i>0</i><i>0</i></span></div><div class="c" style="left:1044px;top:561px;width:54px;text-align:right;padding-right:2px;"><span class="h"><i>2</i><i>4</i><i>0</i></span></div><div class="rl" style="top:577px;background:#80c0ff"></div><div class="c" style="left:104px;top:578px;width:70px;text-align:left;padding-left:4px;"><span class="h"><i>2</i><i>0</i><i>0</i><i>6</i><i class="s">/</i><i>0</i><i>7</i><i class="s">/</i><i>0</i><i>9</i></span></div><div class="c" style="left:174px;top:578px;width:70px;text-align:left;padding-left:4px;"><span class="h"><i>1</i></span><b class="k">回</b><b class="k">函</b><b class="k">館</b><span class="h"><i>8</i></span><b class="k">日</b></div><div class="c" style="left:244px;top:578px;width:20px;text-align:right;padding-right:7px;"><span class="h"><i>1</i><i>2</i></span></div><div class="c" style="left:264px;top:578px;width:180px;text-align:left;padding-left:1px;"><b class="k">竜</b><b class="k">飛</b><b class="k">崎</b><b class="k">特</b><b class="k">別</b><span class="h"><i>1</i><i>0</i><i>0</i><i>0</i></span></div><div class="c" style="left:444px;top:578px;width:122px;text-align:left;padding-left:1px;"><b class="k">セ</b><b class="k">フ</b><b class="k">テ</b><b class="k">ィ</b><b class="k">ー</b><b class="k">ス</b><b class="k">テ</b><b class="k">ー</b><b class="k">ジ</b></div><div class="c" style="left:566px;top:578px;width:20px;text-align:right;padding-right:4px;"><span class="h"><i>1</i><i>3</i></span></div><div class="c" style="left:586px;top:578px;width:42px;text-align:left;padding-left:3px;"><b class="k">ダ</b><span class="h"><i>1</i><i>7</i><i>0</i><i>0</i></span></div><div class="c" style="left:648px;top:578px;width:20px;text-align:center;font-size:13px;">H</div><div class="c" style="left:668px;top:578px;width:48px;text-align:right;padding-right:2px;"><span class="h"><i>5</i><i>7</i><i class="d">.</i><i>0</i><i>K</i><i>g</i></span></div><div class="c" style="left:716px;top:578px;width:20px;text-align:right;padding-right:4px;color:#ff0000;"><span class="h"><i>1</i></span></div><div class="c" style="left:736px;top:578px;width:48px;text-align:right;padding-right:2px;"><span class="h"><i>1</i><i class="d">.</i><i>4</i><i>6</i><i class="d">.</i><i>6</i></span></div><div class="c" style="left:784px;top:578px;width:33px;text-align:right;padding-right:3px;"><span class="h"><i>3</i><i>8</i><i class="d">.</i><i>4</i></span></div><div class="c" style="left:817px;top:578px;width:33px;text-align:right;padding-right:3px;"><span class="h"><i>3</i><i>8</i><i class="d">.</i><i>3</i></span></div><div class="c" style="left:850px;top:578px;width:20px;text-align:right;padding-right:4px;color:#ff0000;"><span class="h"><i>1</i><i>3</i></span></div><div class="c" style="left:870px;top:578px;width:20px;text-align:right;padding-right:4px;"><span class="h"><i>1</i><i>2</i></span></div><div class="c" style="left:890px;top:578px;width:20px;text-align:right;padding-right:4px;"><span class="h"><i>9</i></span></div><div class="c" style="left:910px;top:578px;width:20px;text-align:right;padding-right:4px;"><span class="h"><i>5</i></span></div><div class="c" style="left:930px;top:578px;width:20px;text-align:right;padding-right:4px;"><span class="h"><i>5</i></span></div><div class="c" style="left:950px;top:578px;width:20px;text-align:right;padding-right:4px;"><span class="h"><i>4</i></span></div><div class="c" style="left:970px;top:578px;width:20px;text-align:right;padding-right:4px;"><span class="h"><i>1</i><i>0</i></span></div><div class="c" style="left:990px;top:578px;width:54px;text-align:right;padding-right:2px;"><span class="h"><i>2</i><i>5</i><i>0</i></span></div><div class="c" style="left:1044px;top:578px;width:54px;text-align:right;padding-right:2px;"><span class="h"><i>1</i><i>4</i><i>0</i></span></div><div class="rl" style="top:594px;background:#80c0ff"></div><div class="c" style="left:104px;top:595px;width:70px;text-align:left;padding-left:4px;"><span class="h"><i>2</i><i>0</i><i>0</i><i>6</i><i class="s">/</i><i>0</i><i>7</i><i class="s">/</i><i>0</i><i>8</i></span></div><div class="c" style="left:174px;top:595px;width:70px;text-align:left;padding-left:4px;"><span class="h"><i>4</i></span><b class="k">回</b><b class="k">京</b><b class="k">都</b><span class="h"><i>7</i></span><b class="k">日</b></div><div class="c" style="left:244px;top:595px;width:20px;text-align:right;padding-right:7px;"><span class="h"><i>1</i><i>0</i></span></div><div class="c" style="left:264px;top:595px;width:180px;text-align:left;padding-left:1px;"><b class="k">出</b><b class="k">石</b><b class="k">特</b><b class="k">別</b><b class="k">　</b><span class="h"><i>1</i><i>0</i><i>0</i><i>0</i></span></div><div class="c" style="left:444px;top:595px;width:122px;text-align:left;padding-left:1px;"><b class="k">マ</b><b class="k">チ</b><b class="k">カ</b><b class="k">ネ</b><b class="k">ウ</b><b class="k">マ</b><b class="k">ジ</b><b class="k">ル</b><b class="k">シ</b></div><div class="c" style="left:566px;top:595px;width:20px;text-align:right;padding-right:4px;"><span class="h"><i>1</i><i>1</i></span></div><div class="c" style="left:586px;top:595px;width:42px;text-align:left;padding-left:3px;"><b class="k">芝</b><span class="h"><i>2</i><i>0</i><i>0</i><i>0</i></span></div><div class="c" style="left:628px;top:595px;width:20px;text-align:center;font-size:13px;">D</div><div class="c" style="left:648px;top:595px;width:20px;text-align:center;font-size:13px;">S</div><div class="c" style="left:668px;top:595px;width:48px;text-align:right;padding-right:2px;"><span class="h"><i>5</i><i>4</i><i class="d">.</i><i>0</i><i>K</i><i>g</i></span></div><div class="c" style="left:716px;top:595px;width:20px;text-align:right;padding-right:4px;color:#00a000;"><span class="h"><i>3</i></span></div><div class="c" style="left:736px;top:595px;width:48px;text-align:right;padding-right:2px;"><span class="h"><i>2</i><i class="d">.</i><i>0</i><i>2</i><i class="d">.</i><i>8</i></span></div><div class="c" style="left:784px;top:595px;width:33px;text-align:right;padding-right:3px;"><span class="h"><i>3</i><i>7</i><i class="d">.</i><i>6</i></span></div><div class="c" style="left:817px;top:595px;width:33px;text-align:right;padding-right:3px;"><span class="h"><i>3</i><i>5</i><i class="d">.</i><i>8</i></span></div><div class="c" style="left:850px;top:595px;width:20px;text-align:right;padding-right:4px;"><span class="h"><i>1</i></span></div><div class="c" style="left:870px;top:595px;width:20px;text-align:right;padding-right:4px;"><span class="h"><i>1</i></span></div><div class="c" style="left:890px;top:595px;width:20px;text-align:right;padding-right:4px;"><span class="h"><i>1</i></span></div><div class="c" style="left:910px;top:595px;width:20px;text-align:right;padding-right:4px;"><span class="h"><i>1</i></span></div><div class="c" style="left:930px;top:595px;width:20px;text-align:right;padding-right:4px;"><span class="h"><i>2</i></span></div><div class="c" style="left:950px;top:595px;width:20px;text-align:right;padding-right:4px;"><span class="h"><i>5</i></span></div><div class="c" style="left:970px;top:595px;width:20px;text-align:right;padding-right:4px;"><span class="h"><i>8</i></span></div><div class="c" style="left:990px;top:595px;width:54px;text-align:right;padding-right:2px;"><span class="h"><i>6</i><i>3</i><i>0</i></span></div><div class="c" style="left:1044px;top:595px;width:54px;text-align:right;padding-right:2px;"><span class="h"><i>2</i><i>1</i><i>0</i></span></div><div class="rl" style="top:611px;background:#80c0ff"></div><div class="c" style="left:104px;top:612px;width:70px;text-align:left;padding-left:4px;"><span class="h"><i>2</i><i>0</i><i>0</i><i>6</i><i class="s">/</i><i>0</i><i>7</i><i class="s">/</i><i>0</i><i>8</i></span></div><div class="c" style="left:174px;top:612px;width:70px;text-align:left;padding-left:4px;"><span class="h"><i>4</i></span><b class="k">回</b><b class="k">京</b><b class="k">都</b><span class="h"><i>7</i></span><b class="k">日</b></div><div class="c" style="left:244px;top:612px;width:20px;text-align:right;padding-right:7px;"><span class="h"><i>1</i><i>1</i></span></div><div class="c" style="left:264px;top:612px;width:180px;text-align:left;padding-left:1px;"><b class="k">栂</b><b class="k">尾</b><b class="k">特</b><b class="k">別</b><b class="k">　</b><span class="h"><i>1</i><i>0</i><i>0</i><i>0</i></span></div><div class="c" style="left:444px;top:612px;width:122px;text-align:left;padding-left:1px;"><b class="k">リ</b><b class="k">ー</b><b class="k">ビ</b><b class="k">ン</b><b class="k">ス</b><b class="k">イ</b><b class="k">ー</b><b class="k">パ</b><b class="k">ー</b></div><div class="c" style="left:566px;top:612px;width:20px;text-align:right;padding-right:4px;"><span class="h"><i>1</i><i>6</i></span></div><div class="c" style="left:586px;top:612px;width:42px;text-align:left;padding-left:3px;"><b class="k">ダ</b><span class="h"><i>1</i><i>4</i><i>0</i><i>0</i></span></div><div class="c" style="left:648px;top:612px;width:20px;text-align:center;font-size:13px;">H</div><div class="c" style="left:668px;top:612px;width:48px;text-align:right;padding-right:2px;"><span class="h"><i>5</i><i>7</i><i class="d">.</i><i>0</i><i>K</i><i>g</i></span></div><div class="c" style="left:716px;top:612px;width:20px;text-align:right;padding-right:4px;color:#00a000;"><span class="h"><i>3</i></span></div><div class="c" style="left:736px;top:612px;width:48px;text-align:right;padding-right:2px;"><span class="h"><i>1</i><i class="d">.</i><i>2</i><i>4</i><i class="d">.</i><i>1</i></span></div><div class="c" style="left:784px;top:612px;width:33px;text-align:right;padding-right:3px;"><span class="h"><i>3</i><i>6</i><i class="d">.</i><i>9</i></span></div><div class="c" style="left:817px;top:612px;width:33px;text-align:right;padding-right:3px;"><span class="h"><i>3</i><i>5</i><i class="d">.</i><i>6</i></span></div><div class="c" style="left:850px;top:612px;width:20px;text-align:right;padding-right:4px;"><b class="k">–</b></div><div class="c" style="left:870px;top:612px;width:20px;text-align:right;padding-right:4px;color:#ff0000;"><span class="h"><i>1</i><i>4</i></span></div><div class="c" style="left:890px;top:612px;width:20px;text-align:right;padding-right:4px;"><span class="h"><i>1</i><i>3</i></span></div><div class="c" style="left:910px;top:612px;width:20px;text-align:right;padding-right:4px;"><span class="h"><i>1</i><i>2</i></span></div><div class="c" style="left:930px;top:612px;width:20px;text-align:right;padding-right:4px;"><span class="h"><i>1</i><i>3</i></span></div><div class="c" style="left:950px;top:612px;width:20px;text-align:right;padding-right:4px;"><span class="h"><i>5</i></span></div><div class="c" style="left:970px;top:612px;width:20px;text-align:right;padding-right:4px;"><span class="h"><i>1</i><i>4</i></span></div><div class="c" style="left:990px;top:612px;width:54px;text-align:right;padding-right:2px;"><span class="h"><i>6</i><i>8</i><i>0</i></span></div><div class="c" style="left:1044px;top:612px;width:54px;text-align:right;padding-right:2px;"><span class="h"><i>1</i><i>9</i><i>0</i></span></div><div class="rl" style="top:628px;background:#80c0ff"></div><div class="c" style="left:104px;top:629px;width:70px;text-align:left;padding-left:4px;"><span class="h"><i>2</i><i>0</i><i>0</i><i>6</i><i class="s">/</i><i>0</i><i>7</i><i class="s">/</i><i>0</i><i>8</i></span></div><div class="c" style="left:174px;top:629px;width:70px;text-align:left;padding-left:4px;"><span class="h"><i>2</i></span><b class="k">回</b><b class="k">福</b><b class="k">島</b><span class="h"><i>7</i></span><b class="k">日</b></div><div class="c" style="left:244px;top:629px;width:20px;text-align:right;padding-right:7px;"><span class="h"><i>1</i><i>1</i></span></div><div class="c" style="left:264px;top:629px;width:180px;text-align:left;padding-left:1px;"><b class="k">松</b><b class="k">島</b><b class="k">特</b><b class="k">別</b><b class="k">　</b><span class="h"><i>1</i><i>0</i><i>0</i><i>0</i></span></div><div class="c" style="left:444px;top:629px;width:122px;text-align:left;padding-left:1px;"><b class="k">キ</b><b class="k">ン</b><b class="k">グ</b><b class="k">エ</b><b class="k">ク</b><b class="k">ス</b><b class="k">プ</b><b class="k">レ</b><b class="k">ス</b></div><div class="c" style="left:566px;top:629px;width:20px;text-align:right;padding-right:4px;"><span class="h"><i>9</i></span></div><div class="c" style="left:586px;top:629px;width:42px;text-align:left;padding-left:3px;"><b class="k">芝</b><span class="h"><i>2</i><i>0</i><i>0</i><i>0</i></span></div><div class="c" style="left:628px;top:629px;width:20px;text-align:center;font-size:13px;">B</div><div class="c" style="left:648px;top:629px;width:20px;text-align:center;font-size:13px;">M</div><div class="c" style="left:668px;top:629px;width:48px;text-align:right;padding-right:2px;"><span class="h"><i>5</i><i>7</i><i class="d">.</i><i>0</i><i>K</i><i>g</i></span></div><div class="c" style="left:716px;top:629px;width:20px;text-align:right;padding-right:4px;color:#00a000;"><span class="h"><i>3</i></span></div><div class="c" style="left:736px;top:629px;width:48px;text-align:right;padding-right:2px;"><span class="h"><i>2</i><i class="d">.</i><i>0</i><i>1</i><i class="d">.</i><i>4</i></span></div><div class="c" style="left:784px;top:629px;width:33px;text-align:right;padding-right:3px;"><span class="h"><i>3</i><i>7</i><i class="d">.</i><i>4</i></span></div><div class="c" style="left:817px;top:629px;width:33px;text-align:right;padding-right:3px;"><span class="h"><i>3</i><i>5</i><i class="d">.</i><i>6</i></span></div><div class="c" style="left:850px;top:629px;width:20px;text-align:right;padding-right:4px;"><span class="h"><i>9</i></span></div><div class="c" style="left:870px;top:629px;width:20px;text-align:right;padding-right:4px;"><span class="h"><i>8</i></span></div><div class="c" style="left:890px;top:629px;width:20px;text-align:right;padding-right:4px;"><span class="h"><i>8</i></span></div><div class="c" style="left:910px;top:629px;width:20px;text-align:right;padding-right:4px;"><span class="h"><i>5</i></span></div><div class="c" style="left:930px;top:629px;width:20px;text-align:right;padding-right:4px;"><span class="h"><i>1</i></span></div><div class="c" style="left:950px;top:629px;width:20px;text-align:right;padding-right:4px;"><span class="h"><i>6</i></span></div><div class="c" style="left:970px;top:629px;width:20px;text-align:right;padding-right:4px;"><span class="h"><i>2</i></span></div><div class="c" style="left:990px;top:629px;width:54px;text-align:right;padding-right:2px;"><span class="h"><i>6</i><i>4</i><i>0</i></span></div><div class="c" style="left:1044px;top:629px;width:54px;text-align:right;padding-right:2px;"><span class="h"><i>1</i><i>7</i><i>0</i></span></div><div class="rl" style="top:645px;background:#80c0ff"></div><div class="c" style="left:104px;top:646px;width:70px;text-align:left;padding-left:4px;"><span class="h"><i>2</i><i>0</i><i>0</i><i>6</i><i class="s">/</i><i>0</i><i>7</i><i class="s">/</i><i>0</i><i>8</i></span></div><div class="c" style="left:174px;top:646px;width:70px;text-align:left;padding-left:4px;"><span class="h"><i>1</i></span><b class="k">回</b><b class="k">函</b><b class="k">館</b><span class="h"><i>7</i></span><b class="k">日</b></div><div class="c" style="left:244px;top:646px;width:20px;text-align:right;padding-right:7px;"><span class="h"><i>1</i><i>1</i></span></div><div class="c" style="left:264px;top:646px;width:180px;text-align:left;padding-left:1px;"><b class="k">Ｓ</b><b class="k">Ｔ</b><b class="k">Ｖ</b><b class="k">杯</b><b class="k">　</b><span class="h"><i>1</i><i>0</i><i>0</i><i>0</i></span></div><div class="c" style="left:444px;top:646px;width:122px;text-align:left;padding-left:1px;"><b class="k">コ</b><b class="k">ン</b><b class="k">ド</b><b class="k">ル</b><b class="k">ク</b><b class="k">エ</b><b class="k">ス</b><b class="k">ト</b></div><div class="c" style="left:566px;top:646px;width:20px;text-align:right;padding-right:4px;"><span class="h"><i>1</i><i>0</i></span></div><div class="c" style="left:586px;top:646px;width:42px;text-align:left;padding-left:3px;"><b class="k">芝</b><span class="h"><i>1</i><i>8</i><i>0</i><i>0</i></span></div><div class="c" style="left:628px;top:646px;width:20px;text-align:center;font-size:13px;">A</div><div class="c" style="left:648px;top:646px;width:20px;text-align:center;font-size:13px;">H</div><div class="c" style="left:668px;top:646px;width:48px;text-align:right;padding-right:2px;"><span class="h"><i>5</i><i>7</i><i class="d">.</i><i>0</i><i>K</i><i>g</i></span></div><div class="c" style="left:716px;top:646px;width:20px;text-align:right;padding-right:4px;color:#ff0000;"><span class="h"><i>1</i></span></div><div class="c" style="left:736px;top:646px;width:48px;text-align:right;padding-right:2px;"><span class="h"><i>1</i><i class="d">.</i><i>5</i><i>1</i><i class="d">.</i><i>0</i></span></div><div class="c" style="left:784px;top:646px;width:33px;text-align:right;padding-right:3px;"><span class="h"><i>3</i><i>7</i><i class="d">.</i><i>6</i></span></div><div class="c" style="left:817px;top:646px;width:33px;text-align:right;padding-right:3px;"><span class="h"><i>3</i><i>7</i><i class="d">.</i><i>3</i></span></div><div class="c" style="left:850px;top:646px;width:20px;text-align:right;padding-right:4px;"><span class="h"><i>7</i></span></div><div class="c" style="left:870px;top:646px;width:20px;text-align:right;padding-right:4px;"><span class="h"><i>6</i></span></div><div class="c" style="left:890px;top:646px;width:20px;text-align:right;padding-right:4px;"><span class="h"><i>5</i></span></div><div class="c" style="left:910px;top:646px;width:20px;text-align:right;padding-right:4px;"><span class="h"><i>4</i></span></div><div class="c" style="left:930px;top:646px;width:20px;text-align:right;padding-right:4px;"><span class="h"><i>1</i><i>0</i></span></div><div class="c" style="left:950px;top:646px;width:20px;text-align:right;padding-right:4px;"><span class="h"><i>2</i></span></div><div class="c" style="left:970px;top:646px;width:20px;text-align:right;padding-right:4px;"><span class="h"><i>6</i></span></div><div class="c" style="left:990px;top:646px;width:54px;text-align:right;padding-right:2px;"><span class="h"><i>2</i><i>5</i><i>0</i></span></div><div class="c" style="left:1044px;top:646px;width:54px;text-align:right;padding-right:2px;"><span class="h"><i>1</i><i>1</i><i>0</i></span></div><div class="rl" style="top:662px;background:#80c0ff"></div><div class="c" style="left:104px;top:663px;width:70px;text-align:left;padding-left:4px;"><span class="h"><i>2</i><i>0</i><i>0</i><i>6</i><i class="s">/</i><i>0</i><i>7</i><i class="s">/</i><i>0</i><i>2</i></span></div><div class="c" style="left:174px;top:663px;width:70px;text-align:left;padding-left:4px;"><span class="h"><i>4</i></span><b class="k">回</b><b class="k">京</b><b class="k">都</b><span class="h"><i>6</i></span><b class="k">日</b></div><div class="c" style="left:244px;top:663px;width:20px;text-align:right;padding-right:7px;"><span class="h"><i>9</i></span></div><div class="c" style="left:264px;top:663px;width:180px;text-align:left;padding-left:1px;"><b class="k">御</b><b class="k">室</b><b class="k">特</b><b class="k">別</b><b class="k">　</b><span class="h"><i>1</i><i>0</i><i>0</i><i>0</i></span></div><div class="c" style="left:444px;top:663px;width:122px;text-align:left;padding-left:1px;"><b class="k">ホ</b><b class="k">ッ</b><b class="k">コ</b><b class="k">ー</b><b class="k">ソ</b><b class="k">レ</b><b class="k">ソ</b><b class="k">レ</b><b class="k">ー</b></div><div class="c" style="left:566px;top:663px;width:20px;text-align:right;padding-right:4px;"><span class="h"><i>9</i></span></div><div class="c" style="left:586px;top:663px;width:42px;text-align:left;padding-left:3px;"><b class="k">芝</b><span class="h"><i>1</i><i>8</i><i>0</i><i>0</i></span></div><div class="c" style="left:628px;top:663px;width:20px;text-align:center;font-size:13px;">D</div><div class="c" style="left:648px;top:663px;width:20px;text-align:center;font-size:13px;">S</div><div class="c" style="left:668px;top:663px;width:48px;text-align:right;padding-right:2px;"><span class="h"><i>5</i><i>7</i><i class="d">.</i><i>0</i><i>K</i><i>g</i></span></div><div class="c" style="left:716px;top:663px;width:20px;text-align:right;padding-right:4px;color:#ff0000;"><span class="h"><i>1</i></span></div><div class="c" style="left:736px;top:663px;width:48px;text-align:right;padding-right:2px;"><span class="h"><i>1</i><i class="d">.</i><i>5</i><i>0</i><i class="d">.</i><i>2</i></span></div><div class="c" style="left:784px;top:663px;width:33px;text-align:right;padding-right:3px;"><span class="h"><i>3</i><i>8</i><i class="d">.</i><i>0</i></span></div><div class="c" style="left:817px;top:663px;width:33px;text-align:right;padding-right:3px;"><span class="h"><i>3</i><i>4</i><i class="d">.</i><i>6</i></span></div><div class="c" style="left:850px;top:663px;width:20px;text-align:right;padding-right:4px;"><b class="k">–</b></div><div class="c" style="left:870px;top:663px;width:20px;text-align:right;padding-right:4px;"><span class="h"><i>4</i></span></div><div class="c" style="left:890px;top:663px;width:20px;text-align:right;padding-right:4px;"><span class="h"><i>4</i></span></div><div class="c" style="left:910px;top:663px;width:20px;text-align:right;padding-right:4px;"><span class="h"><i>4</i></span></div><div class="c" style="left:930px;top:663px;width:20px;text-align:right;padding-right:4px;"><span class="h"><i>7</i></span></div><div class="c" style="left:950px;top:663px;width:20px;text-align:right;padding-right:4px;"><span class="h"><i>6</i></span></div><div class="c" style="left:970px;top:663px;width:20px;text-align:right;padding-right:4px;"><span class="h"><i>3</i></span></div><div class="c" style="left:990px;top:663px;width:54px;text-align:right;padding-right:2px;"><span class="h"><i>2</i><i>4</i><i>0</i></span></div><div class="c" style="left:1044px;top:663px;width:54px;text-align:right;padding-right:2px;"><span class="h"><i>1</i><i>2</i><i>0</i></span></div><div class="rl" style="top:679px;background:#80c0ff"></div><div class="c" style="left:104px;top:680px;width:70px;text-align:left;padding-left:4px;"><span class="h"><i>2</i><i>0</i><i>0</i><i>6</i><i class="s">/</i><i>0</i><i>7</i><i class="s">/</i><i>0</i><i>2</i></span></div><div class="c" style="left:174px;top:680px;width:70px;text-align:left;padding-left:4px;"><span class="h"><i>4</i></span><b class="k">回</b><b class="k">京</b><b class="k">都</b><span class="h"><i>6</i></span><b class="k">日</b></div><div class="c" style="left:244px;top:680px;width:20px;text-align:right;padding-right:7px;"><span class="h"><i>1</i><i>0</i></span></div><div class="c" style="left:264px;top:680px;width:180px;text-align:left;padding-left:1px;"><b class="k">紀</b><b class="k">の</b><b class="k">森</b><b class="k">特</b><b class="k">別</b><span class="h"><i>1</i><i>0</i><i>0</i><i>0</i></span></div><div class="c" style="left:444px;top:680px;width:122px;text-align:left;padding-left:1px;"><b class="k">フ</b><b class="k">ウ</b><b class="k">キ</b><b class="k">ア</b><b class="k">ヴ</b><b class="k">ァ</b><b class="k">ン</b><b class="k">セ</b></div><div class="c" style="left:566px;top:680px;width:20px;text-align:right;padding-right:4px;"><span class="h"><i>1</i><i>6</i></span></div><div class="c" style="left:586px;top:680px;width:42px;text-align:left;padding-left:3px;"><b class="k">ダ</b><span class="h"><i>1</i><i>8</i><i>0</i><i>0</i></span></div><div class="c" style="left:648px;top:680px;width:20px;text-align:center;font-size:13px;">M</div><div class="c" style="left:668px;top:680px;width:48px;text-align:right;padding-right:2px;"><span class="h"><i>5</i><i>7</i><i class="d">.</i><i>0</i><i>K</i><i>g</i></span></div><div class="c" style="left:716px;top:680px;width:20px;text-align:right;padding-right:4px;"><span class="h"><i>5</i></span></div><div class="c" style="left:736px;top:680px;width:48px;text-align:right;padding-right:2px;"><span class="h"><i>1</i><i class="d">.</i><i>4</i><i>9</i><i class="d">.</i><i>8</i></span></div><div class="c" style="left:784px;top:680px;width:33px;text-align:right;padding-right:3px;"><span class="h"><i>3</i><i>5</i><i class="d">.</i><i>5</i></span></div><div class="c" style="left:817px;top:680px;width:33px;text-align:right;padding-right:3px;"><span class="h"><i>3</i><i>6</i><i class="d">.</i><i>5</i></span></div><div class="c" style="left:850px;top:680px;width:20px;text-align:right;padding-right:4px;"><span class="h"><i>1</i></span></div><div class="c" style="left:870px;top:680px;width:20px;text-align:right;padding-right:4px;"><span class="h"><i>1</i></span></div><div class="c" style="left:890px;top:680px;width:20px;text-align:right;padding-right:4px;"><span class="h"><i>1</i></span></div><div class="c" style="left:910px;top:680px;width:20px;text-align:right;padding-right:4px;"><span class="h"><i>1</i></span></div><div class="c" style="left:930px;top:680px;width:20px;text-align:right;padding-right:4px;"><span class="h"><i>1</i></span></div><div class="c" style="left:950px;top:680px;width:20px;text-align:right;padding-right:4px;"><span class="h"><i>6</i></span></div><div class="c" style="left:970px;top:680px;width:20px;text-align:right;padding-right:4px;"><span class="h"><i>3</i></span></div><div class="c" style="left:990px;top:680px;width:54px;text-align:right;padding-right:2px;"><span class="h"><i>1</i><i>2</i><i>6</i><i>0</i></span></div><div class="c" style="left:1044px;top:680px;width:54px;text-align:right;padding-right:2px;"><span class="h"><i>3</i><i>0</i><i>0</i></span></div><div class="rl" style="top:696px;background:#80c0ff"></div><div style="left:443px;top:238px;width:1px;height:453px;background:#80c0ff"></div><div style="left:736px;top:238px;width:48px;height:17px;border:1px solid #a0a0ff"></div><div class="dither" style="left:1100px;top:221px;width:16px;height:470px"></div><div class="raised2" style="left:1100px;top:221px;width:16px;height:16px"><svg style="position:absolute;left:4px;top:6px" width="7" height="4"><path d="M3.5 0L7 4H0z" fill="#000"/></svg></div><div class="raised2" style="left:1100px;top:237px;width:16px;height:16px"></div><div class="raised2" style="left:1100px;top:675px;width:16px;height:16px"><svg style="position:absolute;left:4px;top:6px" width="7" height="4"><path d="M0 0H7L3.5 4z" fill="#000"/></svg></div><div class="dither" style="left:104px;top:691px;width:996px;height:16px"></div><div class="raised2" style="left:104px;top:691px;width:16px;height:16px"><svg style="position:absolute;left:5px;top:4px" width="4" height="7"><path d="M4 0V7L0 3.5z" fill="#000"/></svg></div><div class="raised2" style="left:120px;top:691px;width:16px;height:16px"></div><div class="raised2" style="left:1084px;top:691px;width:16px;height:16px"><svg style="position:absolute;left:6px;top:4px" width="4" height="7"><path d="M0 0V7L4 3.5z" fill="#000"/></svg></div><div style="left:1100px;top:691px;width:16px;height:16px;background:#d4d0c8"></div><div style="left:6px;top:709px;height:19px;line-height:19px;white-space:nowrap"><b class="n">ﾚ</b><b class="n">ﾃ</b><b class="n">ﾞ</b><b class="n">ｨ</b></div><div style="left:978px;top:711px;width:21px;height:17px;line-height:16px;box-shadow:inset 1px 1px #808080,inset -1px -1px #fff;padding-left:2px"></div><div style="left:1001px;top:711px;width:29px;height:17px;line-height:16px;box-shadow:inset 1px 1px #808080,inset -1px -1px #fff;padding-left:2px"></div><div style="left:1032px;top:711px;width:31px;height:17px;line-height:16px;box-shadow:inset 1px 1px #808080,inset -1px -1px #fff;padding-left:2px">NUM</div><div style="left:1065px;top:711px;width:35px;height:17px;line-height:16px;box-shadow:inset 1px 1px #808080,inset -1px -1px #fff;padding-left:2px"></div><svg style="position:absolute;left:1100px;top:712px" width="18" height="16" shape-rendering="crispEdges"><rect x="5" y="14" width="1" height="1" fill="#fff"/><rect x="6" y="13" width="1" height="1" fill="#fff"/><rect x="7" y="12" width="1" height="1" fill="#fff"/><rect x="8" y="11" width="1" height="1" fill="#fff"/><rect x="9" y="10" width="1" height="1" fill="#fff"/><rect x="10" y="9" width="1" height="1" fill="#fff"/><rect x="11" y="8" width="1" height="1" fill="#fff"/><rect x="12" y="7" width="1" height="1" fill="#fff"/><rect x="13" y="6" width="1" height="1" fill="#fff"/><rect x="14" y="5" width="1" height="1" fill="#fff"/><rect x="15" y="4" width="1" height="1" fill="#fff"/><rect x="16" y="3" width="1" height="1" fill="#fff"/><rect x="6" y="14" width="1" height="1" fill="#808080"/><rect x="7" y="13" width="1" height="1" fill="#808080"/><rect x="8" y="12" width="1" height="1" fill="#808080"/><rect x="9" y="11" width="1" height="1" fill="#808080"/><rect x="10" y="10" width="1" height="1" fill="#808080"/><rect x="11" y="9" width="1" height="1" fill="#808080"/><rect x="12" y="8" width="1" height="1" fill="#808080"/><rect x="13" y="7" width="1" height="1" fill="#808080"/><rect x="14" y="6" width="1" height="1" fill="#808080"/><rect x="15" y="5" width="1" height="1" fill="#808080"/><rect x="16" y="4" width="1" height="1" fill="#808080"/><rect x="7" y="14" width="1" height="1" fill="#808080"/><rect x="8" y="13" width="1" height="1" fill="#808080"/><rect x="9" y="12" width="1" height="1" fill="#808080"/><rect x="10" y="11" width="1" height="1" fill="#808080"/><rect x="11" y="10" width="1" height="1" fill="#808080"/><rect x="12" y="9" width="1" height="1" fill="#808080"/><rect x="13" y="8" width="1" height="1" fill="#808080"/><rect x="14" y="7" width="1" height="1" fill="#808080"/><rect x="15" y="6" width="1" height="1" fill="#808080"/><rect x="16" y="5" width="1" height="1" fill="#808080"/><rect x="9" y="14" width="1" height="1" fill="#fff"/><rect x="10" y="13" width="1" height="1" fill="#fff"/><rect x="11" y="12" width="1" height="1" fill="#fff"/><rect x="12" y="11" width="1" height="1" fill="#fff"/><rect x="13" y="10" width="1" height="1" fill="#fff"/><rect x="14" y="9" width="1" height="1" fill="#fff"/><rect x="15" y="8" width="1" height="1" fill="#fff"/><rect x="16" y="7" width="1" height="1" fill="#fff"/><rect x="10" y="14" width="1" height="1" fill="#808080"/><rect x="11" y="13" width="1" height="1" fill="#808080"/><rect x="12" y="12" width="1" height="1" fill="#808080"/><rect x="13" y="11" width="1" height="1" fill="#808080"/><rect x="14" y="10" width="1" height="1" fill="#808080"/><rect x="15" y="9" width="1" height="1" fill="#808080"/><rect x="16" y="8" width="1" height="1" fill="#808080"/><rect x="11" y="14" width="1" height="1" fill="#808080"/><rect x="12" y="13" width="1" height="1" fill="#808080"/><rect x="13" y="12" width="1" height="1" fill="#808080"/><rect x="14" y="11" width="1" height="1" fill="#808080"/><rect x="15" y="10" width="1" height="1" fill="#808080"/><rect x="16" y="9" width="1" height="1" fill="#808080"/><rect x="13" y="14" width="1" height="1" fill="#fff"/><rect x="14" y="13" width="1" height="1" fill="#fff"/><rect x="15" y="12" width="1" height="1" fill="#fff"/><rect x="16" y="11" width="1" height="1" fill="#fff"/><rect x="14" y="14" width="1" height="1" fill="#808080"/><rect x="15" y="13" width="1" height="1" fill="#808080"/><rect x="16" y="12" width="1" height="1" fill="#808080"/><rect x="15" y="14" width="1" height="1" fill="#808080"/><rect x="16" y="13" width="1" height="1" fill="#808080"/></svg></body></html>
